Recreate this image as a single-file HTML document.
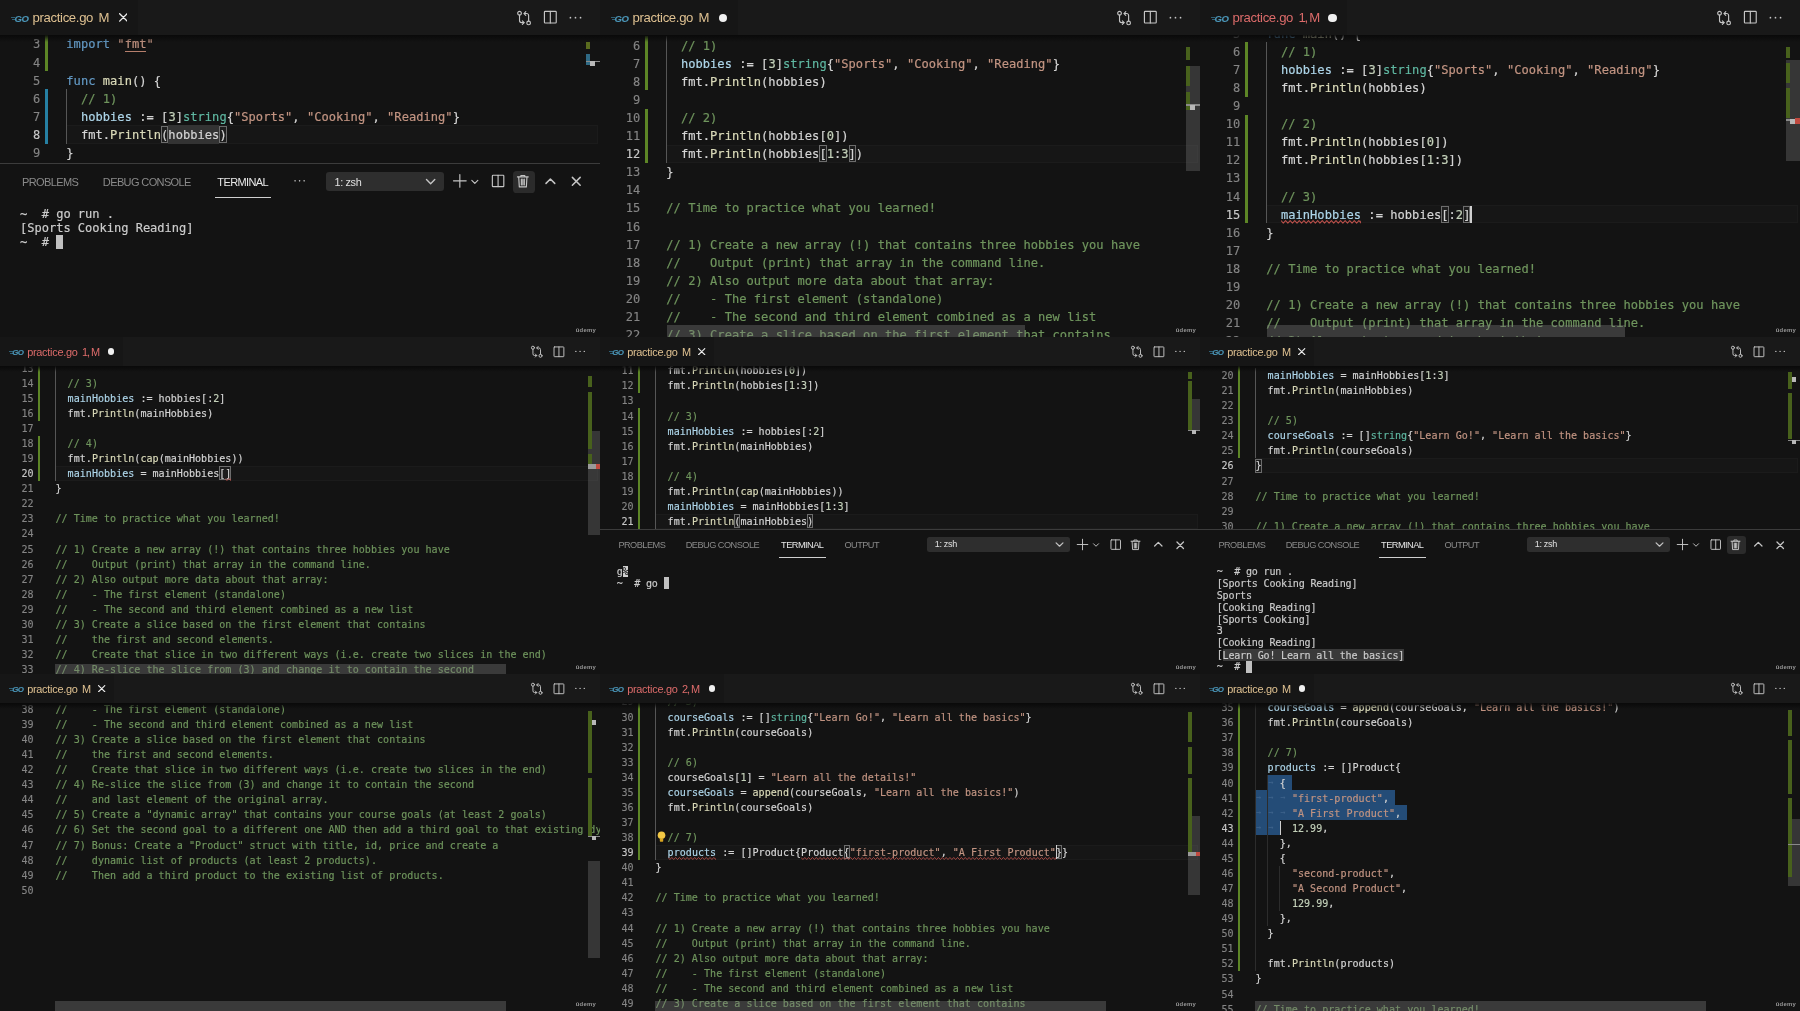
<!DOCTYPE html>
<html lang="en"><head><meta charset="utf-8"><title>practice.go — VS Code grid</title>
<style>
html,body{margin:0;padding:0;background:#131313;}
body>div{will-change:transform}
body{width:1800px;height:1011px;position:relative;overflow:hidden;-webkit-font-smoothing:antialiased}
</style></head><body>
<div style="position:absolute;left:0px;top:0px;width:600px;height:337px;overflow:hidden;background:#131313">
<div style="position:absolute;left:0;top:34.97px;width:600px;height:128.03px;overflow:hidden">
<div style="position:absolute;left:65.73px;top:90.48px;width:532.46px;height:18.09px;box-sizing:border-box;border:1px solid #1b1b1b;background:#161616"></div>
<div style="position:absolute;left:168.36px;top:90.48px;width:51.02px;height:18.09px;background:#333333"></div>
<div style="position:absolute;left:45.22px;top:0.03px;width:3.14px;height:36.18px;background:#5d8626"></div>
<div style="position:absolute;left:45.22px;top:54.30px;width:3.14px;height:54.27px;background:#2680a3"></div>
<div style="position:absolute;left:65.61px;top:54.30px;width:1.50px;height:54.27px;background:#565656"></div>
<div style="position:absolute;left:0;top:0.45px;width:40.28px;height:18.09px;font:12.06px/18.09px 'DejaVu Sans Mono','Liberation Mono',monospace;color:#858585;text-align:right;white-space:pre;-webkit-text-stroke:0.14px">3</div>
<div style="position:absolute;left:66.33px;top:0.45px;height:18.09px;font:12.06px/18.09px 'DejaVu Sans Mono','Liberation Mono',monospace;color:#d4d4d4;white-space:pre;letter-spacing:0.035px;-webkit-text-stroke:0.19px"><span style="color:#6399c4">import</span> <span style="color:#c29482">"fmt"</span></div>
<div style="position:absolute;left:0;top:18.54px;width:40.28px;height:18.09px;font:12.06px/18.09px 'DejaVu Sans Mono','Liberation Mono',monospace;color:#858585;text-align:right;white-space:pre;-webkit-text-stroke:0.14px">4</div>
<div style="position:absolute;left:0;top:36.63px;width:40.28px;height:18.09px;font:12.06px/18.09px 'DejaVu Sans Mono','Liberation Mono',monospace;color:#858585;text-align:right;white-space:pre;-webkit-text-stroke:0.14px">5</div>
<div style="position:absolute;left:66.33px;top:36.63px;height:18.09px;font:12.06px/18.09px 'DejaVu Sans Mono','Liberation Mono',monospace;color:#d4d4d4;white-space:pre;letter-spacing:0.035px;-webkit-text-stroke:0.19px"><span style="color:#6399c4">func</span> <span style="color:#d9d9b8">main</span>() {</div>
<div style="position:absolute;left:0;top:54.72px;width:40.28px;height:18.09px;font:12.06px/18.09px 'DejaVu Sans Mono','Liberation Mono',monospace;color:#858585;text-align:right;white-space:pre;-webkit-text-stroke:0.14px">6</div>
<div style="position:absolute;left:66.33px;top:54.72px;height:18.09px;font:12.06px/18.09px 'DejaVu Sans Mono','Liberation Mono',monospace;color:#d4d4d4;white-space:pre;letter-spacing:0.035px;-webkit-text-stroke:0.19px">  <span style="color:#6f955d">// 1)</span></div>
<div style="position:absolute;left:0;top:72.81px;width:40.28px;height:18.09px;font:12.06px/18.09px 'DejaVu Sans Mono','Liberation Mono',monospace;color:#858585;text-align:right;white-space:pre;-webkit-text-stroke:0.14px">7</div>
<div style="position:absolute;left:66.33px;top:72.81px;height:18.09px;font:12.06px/18.09px 'DejaVu Sans Mono','Liberation Mono',monospace;color:#d4d4d4;white-space:pre;letter-spacing:0.035px;-webkit-text-stroke:0.19px">  <span style="color:#add5e9">hobbies</span> := [<span style="color:#c4d1ba">3</span>]<span style="color:#5fb7a1">string</span>{<span style="color:#c29482">"Sports"</span>, <span style="color:#c29482">"Cooking"</span>, <span style="color:#c29482">"Reading"</span>}</div>
<div style="position:absolute;left:0;top:90.90px;width:40.28px;height:18.09px;font:12.06px/18.09px 'DejaVu Sans Mono','Liberation Mono',monospace;color:#c8c8c8;text-align:right;white-space:pre;-webkit-text-stroke:0.14px">8</div>
<div style="position:absolute;left:66.33px;top:90.90px;height:18.09px;font:12.06px/18.09px 'DejaVu Sans Mono','Liberation Mono',monospace;color:#d4d4d4;white-space:pre;letter-spacing:0.035px;-webkit-text-stroke:0.19px">  fmt.<span style="color:#d9d9b8">Println</span>(hobbies)</div>
<div style="position:absolute;left:0;top:108.99px;width:40.28px;height:18.09px;font:12.06px/18.09px 'DejaVu Sans Mono','Liberation Mono',monospace;color:#858585;text-align:right;white-space:pre;-webkit-text-stroke:0.14px">9</div>
<div style="position:absolute;left:66.33px;top:108.99px;height:18.09px;font:12.06px/18.09px 'DejaVu Sans Mono','Liberation Mono',monospace;color:#d4d4d4;white-space:pre;letter-spacing:0.035px;-webkit-text-stroke:0.19px">}</div>
<div style="position:absolute;left:161.08px;top:91.08px;width:7.29px;height:16.88px;box-sizing:border-box;border:1px solid #6c6c6c;background:rgba(255,255,255,0.03)"></div><div style="position:absolute;left:219.38px;top:91.08px;width:7.29px;height:16.88px;box-sizing:border-box;border:1px solid #6c6c6c;background:rgba(255,255,255,0.03)"></div><div style="position:absolute;left:124.64px;top:15.82px;width:21.86px;height:1.33px;background:#b67f6c"></div>
<div style="position:absolute;left:585.70px;top:7.53px;width:4.30px;height:7.00px;background:#5a6b1e"></div>
<div style="position:absolute;left:585.70px;top:18.83px;width:4.30px;height:10.80px;background:#2f6a85"></div>
<div style="position:absolute;left:585.70px;top:25.63px;width:14.30px;height:1.60px;background:#8a8a8a"></div>
<div style="position:absolute;left:590.00px;top:26.23px;width:5.00px;height:4.80px;background:#b8b8b8"></div>
<div style="position:absolute;left:0.00px;top:0.00px;width:600.00px;height:6.63px;background:linear-gradient(rgba(9,9,9,0.95),rgba(9,9,9,0.7) 30%,rgba(9,9,9,0))"></div>
</div>
<div style="position:absolute;left:0.00px;top:0.00px;width:600.00px;height:34.97px;background:#191919"></div>
<div style="position:absolute;left:0.00px;top:0.00px;width:137.50px;height:34.97px;background:#161616"></div>
<div style="position:absolute;left:10.37px;top:15.20px;width:19.30px;height:9.65px;"><div style="position:absolute;left:0.72px;top:1.57px;width:4.10px;height:0.84px;background:#2f6076"></div><div style="position:absolute;left:1.93px;top:3.50px;width:2.89px;height:0.84px;background:#2f6076"></div><div style="position:absolute;left:4.22px;top:-2.29px;font:italic bold 9.53px/11.43px 'Liberation Sans','DejaVu Sans',sans-serif;color:#4b96b8;-webkit-text-stroke:0.12px #4b96b8;letter-spacing:-0.60px">GO</div></div>
<div style="position:absolute;left:32.56px;top:0;height:34.97px;font:13.15px/36.18px 'Liberation Sans','DejaVu Sans',sans-serif;color:#dfc191;white-space:pre;letter-spacing:-0.34px">practice.go<span style="padding-left:5.31px;letter-spacing:-0.36px">M</span></div>
<svg style="position:absolute;left:118.69px;top:13.39px" width="8.80" height="8.80" viewBox="0 0 8 8" stroke="#ececec" stroke-width="1.25" stroke-linecap="round"><path d="M0.6 0.6l6.8 6.8M7.4 0.6L0.6 7.4"/></svg>
<svg style="position:absolute;left:515.58px;top:9.65px" width="16.16" height="16.16" viewBox="0 0 16 16" fill="none" stroke="#c5c5c5" stroke-width="1.13" stroke-linecap="round" stroke-linejoin="round"><circle cx="3.5" cy="3.2" r="1.8"/><circle cx="12.5" cy="12.8" r="1.8"/><path d="M3.5 5v5.5a2 2 0 0 0 2 2h2.3"/><path d="M6.3 10.7l1.8 1.8-1.8 1.8" /><path d="M12.5 11V5.5a2 2 0 0 0-2-2H8.2"/><path d="M9.7 1.7L7.9 3.5l1.8 1.8"/></svg>
<svg style="position:absolute;left:542.35px;top:9.17px" width="16.16" height="16.16" viewBox="0 0 16 16" fill="none" stroke="#c5c5c5" stroke-width="1.13" stroke-linecap="round" stroke-linejoin="round"><rect x="2.4" y="2.3" width="11.7" height="11.6" rx="0.7"/><path d="M8.25 2.3v11.6"/></svg>
<svg style="position:absolute;left:567.44px;top:9.65px" width="16.16" height="16.16" viewBox="0 0 16 16" fill="none" stroke="#c5c5c5" stroke-width="1.13" stroke-linecap="round" stroke-linejoin="round"><g fill="#c5c5c5" stroke="none"><circle cx="3.4" cy="7.6" r="0.85"/><circle cx="8.4" cy="7.6" r="0.85"/><circle cx="13.4" cy="7.6" r="0.85"/></g></svg>
<div style="position:absolute;left:0.00px;top:163.00px;width:600.00px;height:174.00px;background:#131313"></div>
<div style="position:absolute;left:0.00px;top:163.00px;width:600.00px;height:1.00px;background:#3c3c3c"></div>
<div style="position:absolute;left:22.07px;top:174.82px;font:11.03px/14.47px 'Liberation Sans','DejaVu Sans',sans-serif;color:#8a8a8a;white-space:pre;letter-spacing:-0.63px">PROBLEMS</div>
<div style="position:absolute;left:102.87px;top:174.82px;font:11.03px/14.47px 'Liberation Sans','DejaVu Sans',sans-serif;color:#8a8a8a;white-space:pre;letter-spacing:-0.63px">DEBUG CONSOLE</div>
<div style="position:absolute;left:217.32px;top:174.82px;font:11.03px/14.47px 'Liberation Sans','DejaVu Sans',sans-serif;color:#e7e7e7;white-space:pre;letter-spacing:-0.63px">TERMINAL</div>
<div style="position:absolute;left:214.67px;top:197.01px;width:55.96px;height:1.33px;background:#d0d0d0"></div>
<svg style="position:absolute;left:292.21px;top:174.34px" width="14.47" height="14.47" viewBox="0 0 16 16" fill="none" stroke="#c5c5c5" stroke-width="1.27" stroke-linecap="round" stroke-linejoin="round"><g fill="#c5c5c5" stroke="none"><circle cx="3.4" cy="7.6" r="0.85"/><circle cx="8.4" cy="7.6" r="0.85"/><circle cx="13.4" cy="7.6" r="0.85"/></g></svg>
<div style="position:absolute;left:325.64px;top:171.80px;width:118.55px;height:19.18px;background:#2e2e2e;border-radius:3.01px"></div>
<div style="position:absolute;left:334.56px;top:172.53px;font:10.85px/19.05px 'Liberation Sans','DejaVu Sans',sans-serif;color:#e0e0e0;white-space:pre;letter-spacing:-0.36px">1: zsh</div>
<svg style="position:absolute;left:424.29px;top:174.94px" width="13.27" height="13.27" viewBox="0 0 16 16" fill="none" stroke="#c5c5c5" stroke-width="1.67" stroke-linecap="round" stroke-linejoin="round"><path d="M3 5.5l5 5 5-5"/></svg>
<svg style="position:absolute;left:451.66px;top:173.01px" width="15.68" height="15.68" viewBox="0 0 16 16" fill="none" stroke="#c5c5c5" stroke-width="1.17" stroke-linecap="round" stroke-linejoin="round"><path d="M8 1.5v13M1.5 8h13"/></svg>
<svg style="position:absolute;left:470.11px;top:176.87px" width="9.65" height="9.65" viewBox="0 0 16 16" fill="none" stroke="#c5c5c5" stroke-width="1.90" stroke-linecap="round" stroke-linejoin="round"><path d="M3 5.5l5 5 5-5"/></svg>
<svg style="position:absolute;left:490.25px;top:173.13px" width="15.68" height="15.68" viewBox="0 0 16 16" fill="none" stroke="#c5c5c5" stroke-width="1.17" stroke-linecap="round" stroke-linejoin="round"><rect x="2.4" y="2.3" width="11.7" height="11.6" rx="0.7"/><path d="M8.25 2.3v11.6"/></svg>
<div style="position:absolute;left:512.93px;top:171.20px;width:21.95px;height:21.59px;background:#2b2b2b;border-radius:3.62px"></div>
<svg style="position:absolute;left:515.34px;top:172.89px" width="15.68" height="15.68" viewBox="0 0 16 16" fill="none" stroke="#c5c5c5" stroke-width="1.17" stroke-linecap="round" stroke-linejoin="round"><path d="M2.5 4h11M6 4V2.5h4V4M3.8 4l.6 10.2h7.2L12.2 4M6.5 6.3v6M8 6.3v6M9.5 6.3v6"/></svg>
<svg style="position:absolute;left:543.56px;top:174.82px" width="12.78" height="12.78" viewBox="0 0 16 16" fill="none" stroke="#c5c5c5" stroke-width="1.89" stroke-linecap="round" stroke-linejoin="round"><path d="M2.5 10.5l5.5-5.5 5.5 5.5"/></svg>
<svg style="position:absolute;left:570.33px;top:175.06px" width="12.54" height="12.54" viewBox="0 0 16 16" fill="none" stroke="#c5c5c5" stroke-width="1.92" stroke-linecap="round" stroke-linejoin="round"><path d="M3 3l10 10M13 3L3 13"/></svg>
<div style="position:absolute;left:20.02px;top:207.26px;height:14.07px;font:12.06px/14.07px 'DejaVu Sans Mono','Liberation Mono',monospace;color:#cccccc;white-space:pre;letter-spacing:-0.025px;-webkit-text-stroke:0.18px">~  # go run .</div>
<div style="position:absolute;left:20.02px;top:221.33px;height:14.07px;font:12.06px/14.07px 'DejaVu Sans Mono','Liberation Mono',monospace;color:#cccccc;white-space:pre;letter-spacing:-0.025px;-webkit-text-stroke:0.18px">[Sports Cooking Reading]</div>
<div style="position:absolute;left:20.02px;top:235.41px;height:14.07px;font:12.06px/14.07px 'DejaVu Sans Mono','Liberation Mono',monospace;color:#cccccc;white-space:pre;letter-spacing:-0.025px;-webkit-text-stroke:0.18px">~  # </div>
<div style="position:absolute;left:56.20px;top:235.05px;width:7.24px;height:13.59px;background:#c0c0c0"></div>
<div style="position:absolute;left:575.80px;top:326.20px;font:bold 5.9px/9px 'Liberation Sans','DejaVu Sans',sans-serif;color:#989898;letter-spacing:0.22px">ûdemy</div>
</div>
<div style="position:absolute;left:600px;top:0px;width:600px;height:337px;overflow:hidden;background:#131313">
<div style="position:absolute;left:0;top:34.97px;width:600px;height:302.03px;overflow:hidden">
<div style="position:absolute;left:65.73px;top:109.77px;width:532.46px;height:18.09px;box-sizing:border-box;border:1px solid #1b1b1b;background:#161616"></div>
<div style="position:absolute;left:45.22px;top:1.23px;width:3.14px;height:54.27px;background:#5d8626"></div>
<div style="position:absolute;left:45.22px;top:73.59px;width:3.14px;height:54.27px;background:#5d8626"></div>
<div style="position:absolute;left:65.61px;top:1.23px;width:1.50px;height:126.63px;background:#565656"></div>
<div style="position:absolute;left:0;top:1.65px;width:40.28px;height:18.09px;font:12.06px/18.09px 'DejaVu Sans Mono','Liberation Mono',monospace;color:#858585;text-align:right;white-space:pre;-webkit-text-stroke:0.14px">6</div>
<div style="position:absolute;left:66.33px;top:1.65px;height:18.09px;font:12.06px/18.09px 'DejaVu Sans Mono','Liberation Mono',monospace;color:#d4d4d4;white-space:pre;letter-spacing:0.035px;-webkit-text-stroke:0.19px">  <span style="color:#6f955d">// 1)</span></div>
<div style="position:absolute;left:0;top:19.74px;width:40.28px;height:18.09px;font:12.06px/18.09px 'DejaVu Sans Mono','Liberation Mono',monospace;color:#858585;text-align:right;white-space:pre;-webkit-text-stroke:0.14px">7</div>
<div style="position:absolute;left:66.33px;top:19.74px;height:18.09px;font:12.06px/18.09px 'DejaVu Sans Mono','Liberation Mono',monospace;color:#d4d4d4;white-space:pre;letter-spacing:0.035px;-webkit-text-stroke:0.19px">  <span style="color:#add5e9">hobbies</span> := [<span style="color:#c4d1ba">3</span>]<span style="color:#5fb7a1">string</span>{<span style="color:#c29482">"Sports"</span>, <span style="color:#c29482">"Cooking"</span>, <span style="color:#c29482">"Reading"</span>}</div>
<div style="position:absolute;left:0;top:37.83px;width:40.28px;height:18.09px;font:12.06px/18.09px 'DejaVu Sans Mono','Liberation Mono',monospace;color:#858585;text-align:right;white-space:pre;-webkit-text-stroke:0.14px">8</div>
<div style="position:absolute;left:66.33px;top:37.83px;height:18.09px;font:12.06px/18.09px 'DejaVu Sans Mono','Liberation Mono',monospace;color:#d4d4d4;white-space:pre;letter-spacing:0.035px;-webkit-text-stroke:0.19px">  fmt.<span style="color:#d9d9b8">Println</span>(hobbies)</div>
<div style="position:absolute;left:0;top:55.92px;width:40.28px;height:18.09px;font:12.06px/18.09px 'DejaVu Sans Mono','Liberation Mono',monospace;color:#858585;text-align:right;white-space:pre;-webkit-text-stroke:0.14px">9</div>
<div style="position:absolute;left:0;top:74.01px;width:40.28px;height:18.09px;font:12.06px/18.09px 'DejaVu Sans Mono','Liberation Mono',monospace;color:#858585;text-align:right;white-space:pre;-webkit-text-stroke:0.14px">10</div>
<div style="position:absolute;left:66.33px;top:74.01px;height:18.09px;font:12.06px/18.09px 'DejaVu Sans Mono','Liberation Mono',monospace;color:#d4d4d4;white-space:pre;letter-spacing:0.035px;-webkit-text-stroke:0.19px">  <span style="color:#6f955d">// 2)</span></div>
<div style="position:absolute;left:0;top:92.10px;width:40.28px;height:18.09px;font:12.06px/18.09px 'DejaVu Sans Mono','Liberation Mono',monospace;color:#858585;text-align:right;white-space:pre;-webkit-text-stroke:0.14px">11</div>
<div style="position:absolute;left:66.33px;top:92.10px;height:18.09px;font:12.06px/18.09px 'DejaVu Sans Mono','Liberation Mono',monospace;color:#d4d4d4;white-space:pre;letter-spacing:0.035px;-webkit-text-stroke:0.19px">  fmt.<span style="color:#d9d9b8">Println</span>(hobbies[<span style="color:#c4d1ba">0</span>])</div>
<div style="position:absolute;left:0;top:110.19px;width:40.28px;height:18.09px;font:12.06px/18.09px 'DejaVu Sans Mono','Liberation Mono',monospace;color:#c8c8c8;text-align:right;white-space:pre;-webkit-text-stroke:0.14px">12</div>
<div style="position:absolute;left:66.33px;top:110.19px;height:18.09px;font:12.06px/18.09px 'DejaVu Sans Mono','Liberation Mono',monospace;color:#d4d4d4;white-space:pre;letter-spacing:0.035px;-webkit-text-stroke:0.19px">  fmt.<span style="color:#d9d9b8">Println</span>(hobbies[<span style="color:#c4d1ba">1</span>:<span style="color:#c4d1ba">3</span>])</div>
<div style="position:absolute;left:0;top:128.28px;width:40.28px;height:18.09px;font:12.06px/18.09px 'DejaVu Sans Mono','Liberation Mono',monospace;color:#858585;text-align:right;white-space:pre;-webkit-text-stroke:0.14px">13</div>
<div style="position:absolute;left:66.33px;top:128.28px;height:18.09px;font:12.06px/18.09px 'DejaVu Sans Mono','Liberation Mono',monospace;color:#d4d4d4;white-space:pre;letter-spacing:0.035px;-webkit-text-stroke:0.19px">}</div>
<div style="position:absolute;left:0;top:146.37px;width:40.28px;height:18.09px;font:12.06px/18.09px 'DejaVu Sans Mono','Liberation Mono',monospace;color:#858585;text-align:right;white-space:pre;-webkit-text-stroke:0.14px">14</div>
<div style="position:absolute;left:0;top:164.46px;width:40.28px;height:18.09px;font:12.06px/18.09px 'DejaVu Sans Mono','Liberation Mono',monospace;color:#858585;text-align:right;white-space:pre;-webkit-text-stroke:0.14px">15</div>
<div style="position:absolute;left:66.33px;top:164.46px;height:18.09px;font:12.06px/18.09px 'DejaVu Sans Mono','Liberation Mono',monospace;color:#d4d4d4;white-space:pre;letter-spacing:0.035px;-webkit-text-stroke:0.19px"><span style="color:#6f955d">// Time to practice what you learned!</span></div>
<div style="position:absolute;left:0;top:182.55px;width:40.28px;height:18.09px;font:12.06px/18.09px 'DejaVu Sans Mono','Liberation Mono',monospace;color:#858585;text-align:right;white-space:pre;-webkit-text-stroke:0.14px">16</div>
<div style="position:absolute;left:0;top:200.64px;width:40.28px;height:18.09px;font:12.06px/18.09px 'DejaVu Sans Mono','Liberation Mono',monospace;color:#858585;text-align:right;white-space:pre;-webkit-text-stroke:0.14px">17</div>
<div style="position:absolute;left:66.33px;top:200.64px;height:18.09px;font:12.06px/18.09px 'DejaVu Sans Mono','Liberation Mono',monospace;color:#d4d4d4;white-space:pre;letter-spacing:0.035px;-webkit-text-stroke:0.19px"><span style="color:#6f955d">// 1) Create a new array (!) that contains three hobbies you have</span></div>
<div style="position:absolute;left:0;top:218.73px;width:40.28px;height:18.09px;font:12.06px/18.09px 'DejaVu Sans Mono','Liberation Mono',monospace;color:#858585;text-align:right;white-space:pre;-webkit-text-stroke:0.14px">18</div>
<div style="position:absolute;left:66.33px;top:218.73px;height:18.09px;font:12.06px/18.09px 'DejaVu Sans Mono','Liberation Mono',monospace;color:#d4d4d4;white-space:pre;letter-spacing:0.035px;-webkit-text-stroke:0.19px"><span style="color:#6f955d">//    Output (print) that array in the command line.</span></div>
<div style="position:absolute;left:0;top:236.82px;width:40.28px;height:18.09px;font:12.06px/18.09px 'DejaVu Sans Mono','Liberation Mono',monospace;color:#858585;text-align:right;white-space:pre;-webkit-text-stroke:0.14px">19</div>
<div style="position:absolute;left:66.33px;top:236.82px;height:18.09px;font:12.06px/18.09px 'DejaVu Sans Mono','Liberation Mono',monospace;color:#d4d4d4;white-space:pre;letter-spacing:0.035px;-webkit-text-stroke:0.19px"><span style="color:#6f955d">// 2) Also output more data about that array:</span></div>
<div style="position:absolute;left:0;top:254.91px;width:40.28px;height:18.09px;font:12.06px/18.09px 'DejaVu Sans Mono','Liberation Mono',monospace;color:#858585;text-align:right;white-space:pre;-webkit-text-stroke:0.14px">20</div>
<div style="position:absolute;left:66.33px;top:254.91px;height:18.09px;font:12.06px/18.09px 'DejaVu Sans Mono','Liberation Mono',monospace;color:#d4d4d4;white-space:pre;letter-spacing:0.035px;-webkit-text-stroke:0.19px"><span style="color:#6f955d">//    - The first element (standalone)</span></div>
<div style="position:absolute;left:0;top:273.00px;width:40.28px;height:18.09px;font:12.06px/18.09px 'DejaVu Sans Mono','Liberation Mono',monospace;color:#858585;text-align:right;white-space:pre;-webkit-text-stroke:0.14px">21</div>
<div style="position:absolute;left:66.33px;top:273.00px;height:18.09px;font:12.06px/18.09px 'DejaVu Sans Mono','Liberation Mono',monospace;color:#d4d4d4;white-space:pre;letter-spacing:0.035px;-webkit-text-stroke:0.19px"><span style="color:#6f955d">//    - The second and third element combined as a new list</span></div>
<div style="position:absolute;left:0;top:291.09px;width:40.28px;height:18.09px;font:12.06px/18.09px 'DejaVu Sans Mono','Liberation Mono',monospace;color:#858585;text-align:right;white-space:pre;-webkit-text-stroke:0.14px">22</div>
<div style="position:absolute;left:66.33px;top:291.09px;height:18.09px;font:12.06px/18.09px 'DejaVu Sans Mono','Liberation Mono',monospace;color:#d4d4d4;white-space:pre;letter-spacing:0.035px;-webkit-text-stroke:0.19px"><span style="color:#6f955d">// 3) Create a slice based on the first element that contains</span></div>
<div style="position:absolute;left:219.38px;top:110.37px;width:7.29px;height:16.88px;box-sizing:border-box;border:1px solid #6c6c6c;background:rgba(255,255,255,0.03)"></div><div style="position:absolute;left:248.53px;top:110.37px;width:7.29px;height:16.88px;box-sizing:border-box;border:1px solid #6c6c6c;background:rgba(255,255,255,0.03)"></div>
<div style="position:absolute;left:585.53px;top:31.03px;width:14.47px;height:105.00px;background:rgba(121,121,121,0.35)"></div>
<div style="position:absolute;left:585.70px;top:12.03px;width:4.30px;height:13.00px;background:#48611c"></div>
<div style="position:absolute;left:585.70px;top:31.03px;width:4.30px;height:20.00px;background:#48611c"></div>
<div style="position:absolute;left:585.70px;top:57.03px;width:4.30px;height:18.00px;background:#48611c"></div>
<div style="position:absolute;left:585.70px;top:69.53px;width:14.30px;height:1.50px;background:#8a8a8a"></div>
<div style="position:absolute;left:590.00px;top:70.03px;width:5.00px;height:5.00px;background:#b8b8b8"></div>
<div style="position:absolute;left:66.70px;top:289.85px;width:358.30px;height:13.18px;background:rgba(128,128,128,0.36)"></div>
<div style="position:absolute;left:0.00px;top:0.00px;width:600.00px;height:6.63px;background:linear-gradient(rgba(9,9,9,0.95),rgba(9,9,9,0.7) 30%,rgba(9,9,9,0))"></div>
</div>
<div style="position:absolute;left:0.00px;top:0.00px;width:600.00px;height:34.97px;background:#191919"></div>
<div style="position:absolute;left:0.00px;top:0.00px;width:137.50px;height:34.97px;background:#161616"></div>
<div style="position:absolute;left:10.37px;top:15.20px;width:19.30px;height:9.65px;"><div style="position:absolute;left:0.72px;top:1.57px;width:4.10px;height:0.84px;background:#2f6076"></div><div style="position:absolute;left:1.93px;top:3.50px;width:2.89px;height:0.84px;background:#2f6076"></div><div style="position:absolute;left:4.22px;top:-2.29px;font:italic bold 9.53px/11.43px 'Liberation Sans','DejaVu Sans',sans-serif;color:#4b96b8;-webkit-text-stroke:0.12px #4b96b8;letter-spacing:-0.60px">GO</div></div>
<div style="position:absolute;left:32.56px;top:0;height:34.97px;font:13.15px/36.18px 'Liberation Sans','DejaVu Sans',sans-serif;color:#dfc191;white-space:pre;letter-spacing:-0.34px">practice.go<span style="padding-left:5.31px;letter-spacing:-0.36px">M</span></div>
<div style="position:absolute;left:118.93px;top:13.75px;width:8.20px;height:8.20px;background:#f0f0f0;border-radius:50%"></div>
<svg style="position:absolute;left:515.58px;top:9.65px" width="16.16" height="16.16" viewBox="0 0 16 16" fill="none" stroke="#c5c5c5" stroke-width="1.13" stroke-linecap="round" stroke-linejoin="round"><circle cx="3.5" cy="3.2" r="1.8"/><circle cx="12.5" cy="12.8" r="1.8"/><path d="M3.5 5v5.5a2 2 0 0 0 2 2h2.3"/><path d="M6.3 10.7l1.8 1.8-1.8 1.8" /><path d="M12.5 11V5.5a2 2 0 0 0-2-2H8.2"/><path d="M9.7 1.7L7.9 3.5l1.8 1.8"/></svg>
<svg style="position:absolute;left:542.35px;top:9.17px" width="16.16" height="16.16" viewBox="0 0 16 16" fill="none" stroke="#c5c5c5" stroke-width="1.13" stroke-linecap="round" stroke-linejoin="round"><rect x="2.4" y="2.3" width="11.7" height="11.6" rx="0.7"/><path d="M8.25 2.3v11.6"/></svg>
<svg style="position:absolute;left:567.44px;top:9.65px" width="16.16" height="16.16" viewBox="0 0 16 16" fill="none" stroke="#c5c5c5" stroke-width="1.13" stroke-linecap="round" stroke-linejoin="round"><g fill="#c5c5c5" stroke="none"><circle cx="3.4" cy="7.6" r="0.85"/><circle cx="8.4" cy="7.6" r="0.85"/><circle cx="13.4" cy="7.6" r="0.85"/></g></svg>
<div style="position:absolute;left:575.80px;top:326.20px;font:bold 5.9px/9px 'Liberation Sans','DejaVu Sans',sans-serif;color:#989898;letter-spacing:0.22px">ûdemy</div>
</div>
<div style="position:absolute;left:1200px;top:0px;width:600px;height:337px;overflow:hidden;background:#131313">
<div style="position:absolute;left:0;top:34.97px;width:600px;height:302.03px;overflow:hidden">
<div style="position:absolute;left:65.73px;top:170.23px;width:532.46px;height:18.09px;box-sizing:border-box;border:1px solid #1b1b1b;background:#161616"></div>
<div style="position:absolute;left:45.22px;top:7.42px;width:3.14px;height:54.27px;background:#5d8626"></div>
<div style="position:absolute;left:45.22px;top:79.78px;width:3.14px;height:108.54px;background:#5d8626"></div>
<div style="position:absolute;left:65.61px;top:7.42px;width:1.50px;height:180.90px;background:#565656"></div>
<div style="position:absolute;left:0;top:-10.25px;width:40.28px;height:18.09px;font:12.06px/18.09px 'DejaVu Sans Mono','Liberation Mono',monospace;color:#858585;text-align:right;white-space:pre;-webkit-text-stroke:0.14px">5</div>
<div style="position:absolute;left:66.33px;top:-10.25px;height:18.09px;font:12.06px/18.09px 'DejaVu Sans Mono','Liberation Mono',monospace;color:#d4d4d4;white-space:pre;letter-spacing:0.035px;-webkit-text-stroke:0.19px"><span style="color:#6399c4">func</span> <span style="color:#d9d9b8">main</span>() {</div>
<div style="position:absolute;left:0;top:7.84px;width:40.28px;height:18.09px;font:12.06px/18.09px 'DejaVu Sans Mono','Liberation Mono',monospace;color:#858585;text-align:right;white-space:pre;-webkit-text-stroke:0.14px">6</div>
<div style="position:absolute;left:66.33px;top:7.84px;height:18.09px;font:12.06px/18.09px 'DejaVu Sans Mono','Liberation Mono',monospace;color:#d4d4d4;white-space:pre;letter-spacing:0.035px;-webkit-text-stroke:0.19px">  <span style="color:#6f955d">// 1)</span></div>
<div style="position:absolute;left:0;top:25.93px;width:40.28px;height:18.09px;font:12.06px/18.09px 'DejaVu Sans Mono','Liberation Mono',monospace;color:#858585;text-align:right;white-space:pre;-webkit-text-stroke:0.14px">7</div>
<div style="position:absolute;left:66.33px;top:25.93px;height:18.09px;font:12.06px/18.09px 'DejaVu Sans Mono','Liberation Mono',monospace;color:#d4d4d4;white-space:pre;letter-spacing:0.035px;-webkit-text-stroke:0.19px">  <span style="color:#add5e9">hobbies</span> := [<span style="color:#c4d1ba">3</span>]<span style="color:#5fb7a1">string</span>{<span style="color:#c29482">"Sports"</span>, <span style="color:#c29482">"Cooking"</span>, <span style="color:#c29482">"Reading"</span>}</div>
<div style="position:absolute;left:0;top:44.02px;width:40.28px;height:18.09px;font:12.06px/18.09px 'DejaVu Sans Mono','Liberation Mono',monospace;color:#858585;text-align:right;white-space:pre;-webkit-text-stroke:0.14px">8</div>
<div style="position:absolute;left:66.33px;top:44.02px;height:18.09px;font:12.06px/18.09px 'DejaVu Sans Mono','Liberation Mono',monospace;color:#d4d4d4;white-space:pre;letter-spacing:0.035px;-webkit-text-stroke:0.19px">  fmt.<span style="color:#d9d9b8">Println</span>(hobbies)</div>
<div style="position:absolute;left:0;top:62.11px;width:40.28px;height:18.09px;font:12.06px/18.09px 'DejaVu Sans Mono','Liberation Mono',monospace;color:#858585;text-align:right;white-space:pre;-webkit-text-stroke:0.14px">9</div>
<div style="position:absolute;left:0;top:80.20px;width:40.28px;height:18.09px;font:12.06px/18.09px 'DejaVu Sans Mono','Liberation Mono',monospace;color:#858585;text-align:right;white-space:pre;-webkit-text-stroke:0.14px">10</div>
<div style="position:absolute;left:66.33px;top:80.20px;height:18.09px;font:12.06px/18.09px 'DejaVu Sans Mono','Liberation Mono',monospace;color:#d4d4d4;white-space:pre;letter-spacing:0.035px;-webkit-text-stroke:0.19px">  <span style="color:#6f955d">// 2)</span></div>
<div style="position:absolute;left:0;top:98.29px;width:40.28px;height:18.09px;font:12.06px/18.09px 'DejaVu Sans Mono','Liberation Mono',monospace;color:#858585;text-align:right;white-space:pre;-webkit-text-stroke:0.14px">11</div>
<div style="position:absolute;left:66.33px;top:98.29px;height:18.09px;font:12.06px/18.09px 'DejaVu Sans Mono','Liberation Mono',monospace;color:#d4d4d4;white-space:pre;letter-spacing:0.035px;-webkit-text-stroke:0.19px">  fmt.<span style="color:#d9d9b8">Println</span>(hobbies[<span style="color:#c4d1ba">0</span>])</div>
<div style="position:absolute;left:0;top:116.38px;width:40.28px;height:18.09px;font:12.06px/18.09px 'DejaVu Sans Mono','Liberation Mono',monospace;color:#858585;text-align:right;white-space:pre;-webkit-text-stroke:0.14px">12</div>
<div style="position:absolute;left:66.33px;top:116.38px;height:18.09px;font:12.06px/18.09px 'DejaVu Sans Mono','Liberation Mono',monospace;color:#d4d4d4;white-space:pre;letter-spacing:0.035px;-webkit-text-stroke:0.19px">  fmt.<span style="color:#d9d9b8">Println</span>(hobbies[<span style="color:#c4d1ba">1</span>:<span style="color:#c4d1ba">3</span>])</div>
<div style="position:absolute;left:0;top:134.47px;width:40.28px;height:18.09px;font:12.06px/18.09px 'DejaVu Sans Mono','Liberation Mono',monospace;color:#858585;text-align:right;white-space:pre;-webkit-text-stroke:0.14px">13</div>
<div style="position:absolute;left:0;top:152.56px;width:40.28px;height:18.09px;font:12.06px/18.09px 'DejaVu Sans Mono','Liberation Mono',monospace;color:#858585;text-align:right;white-space:pre;-webkit-text-stroke:0.14px">14</div>
<div style="position:absolute;left:66.33px;top:152.56px;height:18.09px;font:12.06px/18.09px 'DejaVu Sans Mono','Liberation Mono',monospace;color:#d4d4d4;white-space:pre;letter-spacing:0.035px;-webkit-text-stroke:0.19px">  <span style="color:#6f955d">// 3)</span></div>
<div style="position:absolute;left:0;top:170.65px;width:40.28px;height:18.09px;font:12.06px/18.09px 'DejaVu Sans Mono','Liberation Mono',monospace;color:#c8c8c8;text-align:right;white-space:pre;-webkit-text-stroke:0.14px">15</div>
<div style="position:absolute;left:66.33px;top:170.65px;height:18.09px;font:12.06px/18.09px 'DejaVu Sans Mono','Liberation Mono',monospace;color:#d4d4d4;white-space:pre;letter-spacing:0.035px;-webkit-text-stroke:0.19px">  <span style="color:#add5e9">mainHobbies</span> := hobbies[:<span style="color:#c4d1ba">2</span>]</div>
<div style="position:absolute;left:0;top:188.74px;width:40.28px;height:18.09px;font:12.06px/18.09px 'DejaVu Sans Mono','Liberation Mono',monospace;color:#858585;text-align:right;white-space:pre;-webkit-text-stroke:0.14px">16</div>
<div style="position:absolute;left:66.33px;top:188.74px;height:18.09px;font:12.06px/18.09px 'DejaVu Sans Mono','Liberation Mono',monospace;color:#d4d4d4;white-space:pre;letter-spacing:0.035px;-webkit-text-stroke:0.19px">}</div>
<div style="position:absolute;left:0;top:206.83px;width:40.28px;height:18.09px;font:12.06px/18.09px 'DejaVu Sans Mono','Liberation Mono',monospace;color:#858585;text-align:right;white-space:pre;-webkit-text-stroke:0.14px">17</div>
<div style="position:absolute;left:0;top:224.92px;width:40.28px;height:18.09px;font:12.06px/18.09px 'DejaVu Sans Mono','Liberation Mono',monospace;color:#858585;text-align:right;white-space:pre;-webkit-text-stroke:0.14px">18</div>
<div style="position:absolute;left:66.33px;top:224.92px;height:18.09px;font:12.06px/18.09px 'DejaVu Sans Mono','Liberation Mono',monospace;color:#d4d4d4;white-space:pre;letter-spacing:0.035px;-webkit-text-stroke:0.19px"><span style="color:#6f955d">// Time to practice what you learned!</span></div>
<div style="position:absolute;left:0;top:243.01px;width:40.28px;height:18.09px;font:12.06px/18.09px 'DejaVu Sans Mono','Liberation Mono',monospace;color:#858585;text-align:right;white-space:pre;-webkit-text-stroke:0.14px">19</div>
<div style="position:absolute;left:0;top:261.10px;width:40.28px;height:18.09px;font:12.06px/18.09px 'DejaVu Sans Mono','Liberation Mono',monospace;color:#858585;text-align:right;white-space:pre;-webkit-text-stroke:0.14px">20</div>
<div style="position:absolute;left:66.33px;top:261.10px;height:18.09px;font:12.06px/18.09px 'DejaVu Sans Mono','Liberation Mono',monospace;color:#d4d4d4;white-space:pre;letter-spacing:0.035px;-webkit-text-stroke:0.19px"><span style="color:#6f955d">// 1) Create a new array (!) that contains three hobbies you have</span></div>
<div style="position:absolute;left:0;top:279.19px;width:40.28px;height:18.09px;font:12.06px/18.09px 'DejaVu Sans Mono','Liberation Mono',monospace;color:#858585;text-align:right;white-space:pre;-webkit-text-stroke:0.14px">21</div>
<div style="position:absolute;left:66.33px;top:279.19px;height:18.09px;font:12.06px/18.09px 'DejaVu Sans Mono','Liberation Mono',monospace;color:#d4d4d4;white-space:pre;letter-spacing:0.035px;-webkit-text-stroke:0.19px"><span style="color:#6f955d">//    Output (print) that array in the command line.</span></div>
<div style="position:absolute;left:0;top:297.28px;width:40.28px;height:18.09px;font:12.06px/18.09px 'DejaVu Sans Mono','Liberation Mono',monospace;color:#858585;text-align:right;white-space:pre;-webkit-text-stroke:0.14px">22</div>
<div style="position:absolute;left:66.33px;top:297.28px;height:18.09px;font:12.06px/18.09px 'DejaVu Sans Mono','Liberation Mono',monospace;color:#d4d4d4;white-space:pre;letter-spacing:0.035px;-webkit-text-stroke:0.19px"><span style="color:#6f955d">// 2) Also output more data about that array:</span></div>
<div style="position:absolute;left:241.24px;top:170.83px;width:7.29px;height:16.88px;box-sizing:border-box;border:1px solid #6c6c6c;background:rgba(255,255,255,0.03)"></div><div style="position:absolute;left:263.11px;top:170.83px;width:7.29px;height:16.88px;box-sizing:border-box;border:1px solid #6c6c6c;background:rgba(255,255,255,0.03)"></div><div style="position:absolute;left:270.39px;top:170.83px;width:1.69px;height:16.88px;background:#cfcfcf"></div><svg style="position:absolute;left:80.91px;top:184.94px;opacity:0.9" width="80.17" height="3.62" fill="none" stroke="#cc5650" stroke-width="1.03" stroke-linejoin="round"><polyline points="0.00,0.54 2.29,3.08 4.58,0.54 6.87,3.08 9.17,0.54 11.46,3.08 13.75,0.54 16.04,3.08 18.33,0.54 20.62,3.08 22.91,0.54 25.21,3.08 27.50,0.54 29.79,3.08 32.08,0.54 34.37,3.08 36.66,0.54 38.95,3.08 41.25,0.54 43.54,3.08 45.83,0.54 48.12,3.08 50.41,0.54 52.70,3.08 54.99,0.54 57.28,3.08 59.58,0.54 61.87,3.08 64.16,0.54 66.45,3.08 68.74,0.54 71.03,3.08 73.32,0.54 75.62,3.08 77.91,0.54 80.17,3.08 80.17,0.54"/></svg>
<div style="position:absolute;left:585.53px;top:25.03px;width:14.47px;height:101.00px;background:rgba(121,121,121,0.35)"></div>
<div style="position:absolute;left:585.70px;top:12.03px;width:4.30px;height:11.00px;background:#48611c"></div>
<div style="position:absolute;left:585.70px;top:28.03px;width:4.30px;height:20.00px;background:#48611c"></div>
<div style="position:absolute;left:585.70px;top:53.03px;width:4.30px;height:30.00px;background:#48611c"></div>
<div style="position:absolute;left:585.70px;top:84.53px;width:14.30px;height:1.50px;background:#8a8a8a"></div>
<div style="position:absolute;left:590.00px;top:84.03px;width:5.00px;height:5.00px;background:#b8b8b8"></div>
<div style="position:absolute;left:595.00px;top:83.03px;width:5.00px;height:6.00px;background:#c04a40"></div>
<div style="position:absolute;left:66.70px;top:289.85px;width:358.30px;height:13.18px;background:rgba(128,128,128,0.36)"></div>
<div style="position:absolute;left:0.00px;top:0.00px;width:600.00px;height:6.63px;background:linear-gradient(rgba(9,9,9,0.95),rgba(9,9,9,0.7) 30%,rgba(9,9,9,0))"></div>
</div>
<div style="position:absolute;left:0.00px;top:0.00px;width:600.00px;height:34.97px;background:#191919"></div>
<div style="position:absolute;left:0.00px;top:0.00px;width:147.00px;height:34.97px;background:#161616"></div>
<div style="position:absolute;left:10.37px;top:15.20px;width:19.30px;height:9.65px;"><div style="position:absolute;left:0.72px;top:1.57px;width:4.10px;height:0.84px;background:#2f6076"></div><div style="position:absolute;left:1.93px;top:3.50px;width:2.89px;height:0.84px;background:#2f6076"></div><div style="position:absolute;left:4.22px;top:-2.29px;font:italic bold 9.53px/11.43px 'Liberation Sans','DejaVu Sans',sans-serif;color:#4b96b8;-webkit-text-stroke:0.12px #4b96b8;letter-spacing:-0.60px">GO</div></div>
<div style="position:absolute;left:32.56px;top:0;height:34.97px;font:13.15px/36.18px 'Liberation Sans','DejaVu Sans',sans-serif;color:#dc6b6a;white-space:pre;letter-spacing:-0.34px">practice.go<span style="padding-left:5.31px;letter-spacing:-1.27px">1, M</span></div>
<div style="position:absolute;left:128.43px;top:13.75px;width:8.20px;height:8.20px;background:#f0f0f0;border-radius:50%"></div>
<svg style="position:absolute;left:515.58px;top:9.65px" width="16.16" height="16.16" viewBox="0 0 16 16" fill="none" stroke="#c5c5c5" stroke-width="1.13" stroke-linecap="round" stroke-linejoin="round"><circle cx="3.5" cy="3.2" r="1.8"/><circle cx="12.5" cy="12.8" r="1.8"/><path d="M3.5 5v5.5a2 2 0 0 0 2 2h2.3"/><path d="M6.3 10.7l1.8 1.8-1.8 1.8" /><path d="M12.5 11V5.5a2 2 0 0 0-2-2H8.2"/><path d="M9.7 1.7L7.9 3.5l1.8 1.8"/></svg>
<svg style="position:absolute;left:542.35px;top:9.17px" width="16.16" height="16.16" viewBox="0 0 16 16" fill="none" stroke="#c5c5c5" stroke-width="1.13" stroke-linecap="round" stroke-linejoin="round"><rect x="2.4" y="2.3" width="11.7" height="11.6" rx="0.7"/><path d="M8.25 2.3v11.6"/></svg>
<svg style="position:absolute;left:567.44px;top:9.65px" width="16.16" height="16.16" viewBox="0 0 16 16" fill="none" stroke="#c5c5c5" stroke-width="1.13" stroke-linecap="round" stroke-linejoin="round"><g fill="#c5c5c5" stroke="none"><circle cx="3.4" cy="7.6" r="0.85"/><circle cx="8.4" cy="7.6" r="0.85"/><circle cx="13.4" cy="7.6" r="0.85"/></g></svg>
<div style="position:absolute;left:575.80px;top:326.20px;font:bold 5.9px/9px 'Liberation Sans','DejaVu Sans',sans-serif;color:#989898;letter-spacing:0.22px">ûdemy</div>
</div>
<div style="position:absolute;left:0px;top:337px;width:600px;height:337px;overflow:hidden;background:#131313">
<div style="position:absolute;left:0;top:29.14px;width:600px;height:307.86px;overflow:hidden">
<div style="position:absolute;left:54.98px;top:99.68px;width:543.52px;height:15.07px;box-sizing:border-box;border:1px solid #1b1b1b;background:#161616"></div>
<div style="position:absolute;left:37.69px;top:-5.84px;width:2.61px;height:60.30px;background:#5d8626"></div>
<div style="position:absolute;left:37.69px;top:69.53px;width:2.61px;height:45.22px;background:#5d8626"></div>
<div style="position:absolute;left:54.87px;top:-5.84px;width:1.10px;height:120.60px;background:#565656"></div>
<div style="position:absolute;left:0;top:-5.49px;width:33.57px;height:15.07px;font:10.05px/15.07px 'DejaVu Sans Mono','Liberation Mono',monospace;color:#858585;text-align:right;white-space:pre;-webkit-text-stroke:0.12px">13</div>
<div style="position:absolute;left:0;top:9.58px;width:33.57px;height:15.07px;font:10.05px/15.07px 'DejaVu Sans Mono','Liberation Mono',monospace;color:#858585;text-align:right;white-space:pre;-webkit-text-stroke:0.12px">14</div>
<div style="position:absolute;left:55.48px;top:9.58px;height:15.07px;font:10.05px/15.07px 'DejaVu Sans Mono','Liberation Mono',monospace;color:#d4d4d4;white-space:pre;letter-spacing:0.018px;-webkit-text-stroke:0.16px">  <span style="color:#6f955d">// 3)</span></div>
<div style="position:absolute;left:0;top:24.66px;width:33.57px;height:15.07px;font:10.05px/15.07px 'DejaVu Sans Mono','Liberation Mono',monospace;color:#858585;text-align:right;white-space:pre;-webkit-text-stroke:0.12px">15</div>
<div style="position:absolute;left:55.48px;top:24.66px;height:15.07px;font:10.05px/15.07px 'DejaVu Sans Mono','Liberation Mono',monospace;color:#d4d4d4;white-space:pre;letter-spacing:0.018px;-webkit-text-stroke:0.16px">  <span style="color:#add5e9">mainHobbies</span> := hobbies[:<span style="color:#c4d1ba">2</span>]</div>
<div style="position:absolute;left:0;top:39.73px;width:33.57px;height:15.07px;font:10.05px/15.07px 'DejaVu Sans Mono','Liberation Mono',monospace;color:#858585;text-align:right;white-space:pre;-webkit-text-stroke:0.12px">16</div>
<div style="position:absolute;left:55.48px;top:39.73px;height:15.07px;font:10.05px/15.07px 'DejaVu Sans Mono','Liberation Mono',monospace;color:#d4d4d4;white-space:pre;letter-spacing:0.018px;-webkit-text-stroke:0.16px">  fmt.<span style="color:#d9d9b8">Println</span>(mainHobbies)</div>
<div style="position:absolute;left:0;top:54.81px;width:33.57px;height:15.07px;font:10.05px/15.07px 'DejaVu Sans Mono','Liberation Mono',monospace;color:#858585;text-align:right;white-space:pre;-webkit-text-stroke:0.12px">17</div>
<div style="position:absolute;left:0;top:69.88px;width:33.57px;height:15.07px;font:10.05px/15.07px 'DejaVu Sans Mono','Liberation Mono',monospace;color:#858585;text-align:right;white-space:pre;-webkit-text-stroke:0.12px">18</div>
<div style="position:absolute;left:55.48px;top:69.88px;height:15.07px;font:10.05px/15.07px 'DejaVu Sans Mono','Liberation Mono',monospace;color:#d4d4d4;white-space:pre;letter-spacing:0.018px;-webkit-text-stroke:0.16px">  <span style="color:#6f955d">// 4)</span></div>
<div style="position:absolute;left:0;top:84.96px;width:33.57px;height:15.07px;font:10.05px/15.07px 'DejaVu Sans Mono','Liberation Mono',monospace;color:#858585;text-align:right;white-space:pre;-webkit-text-stroke:0.12px">19</div>
<div style="position:absolute;left:55.48px;top:84.96px;height:15.07px;font:10.05px/15.07px 'DejaVu Sans Mono','Liberation Mono',monospace;color:#d4d4d4;white-space:pre;letter-spacing:0.018px;-webkit-text-stroke:0.16px">  fmt.<span style="color:#d9d9b8">Println</span>(<span style="color:#d9d9b8">cap</span>(mainHobbies))</div>
<div style="position:absolute;left:0;top:100.03px;width:33.57px;height:15.07px;font:10.05px/15.07px 'DejaVu Sans Mono','Liberation Mono',monospace;color:#c8c8c8;text-align:right;white-space:pre;-webkit-text-stroke:0.12px">20</div>
<div style="position:absolute;left:55.48px;top:100.03px;height:15.07px;font:10.05px/15.07px 'DejaVu Sans Mono','Liberation Mono',monospace;color:#d4d4d4;white-space:pre;letter-spacing:0.018px;-webkit-text-stroke:0.16px">  <span style="color:#add5e9">mainHobbies</span> = mainHobbies[]</div>
<div style="position:absolute;left:0;top:115.11px;width:33.57px;height:15.07px;font:10.05px/15.07px 'DejaVu Sans Mono','Liberation Mono',monospace;color:#858585;text-align:right;white-space:pre;-webkit-text-stroke:0.12px">21</div>
<div style="position:absolute;left:55.48px;top:115.11px;height:15.07px;font:10.05px/15.07px 'DejaVu Sans Mono','Liberation Mono',monospace;color:#d4d4d4;white-space:pre;letter-spacing:0.018px;-webkit-text-stroke:0.16px">}</div>
<div style="position:absolute;left:0;top:130.18px;width:33.57px;height:15.07px;font:10.05px/15.07px 'DejaVu Sans Mono','Liberation Mono',monospace;color:#858585;text-align:right;white-space:pre;-webkit-text-stroke:0.12px">22</div>
<div style="position:absolute;left:0;top:145.26px;width:33.57px;height:15.07px;font:10.05px/15.07px 'DejaVu Sans Mono','Liberation Mono',monospace;color:#858585;text-align:right;white-space:pre;-webkit-text-stroke:0.12px">23</div>
<div style="position:absolute;left:55.48px;top:145.26px;height:15.07px;font:10.05px/15.07px 'DejaVu Sans Mono','Liberation Mono',monospace;color:#d4d4d4;white-space:pre;letter-spacing:0.018px;-webkit-text-stroke:0.16px"><span style="color:#6f955d">// Time to practice what you learned!</span></div>
<div style="position:absolute;left:0;top:160.33px;width:33.57px;height:15.07px;font:10.05px/15.07px 'DejaVu Sans Mono','Liberation Mono',monospace;color:#858585;text-align:right;white-space:pre;-webkit-text-stroke:0.12px">24</div>
<div style="position:absolute;left:0;top:175.41px;width:33.57px;height:15.07px;font:10.05px/15.07px 'DejaVu Sans Mono','Liberation Mono',monospace;color:#858585;text-align:right;white-space:pre;-webkit-text-stroke:0.12px">25</div>
<div style="position:absolute;left:55.48px;top:175.41px;height:15.07px;font:10.05px/15.07px 'DejaVu Sans Mono','Liberation Mono',monospace;color:#d4d4d4;white-space:pre;letter-spacing:0.018px;-webkit-text-stroke:0.16px"><span style="color:#6f955d">// 1) Create a new array (!) that contains three hobbies you have</span></div>
<div style="position:absolute;left:0;top:190.48px;width:33.57px;height:15.07px;font:10.05px/15.07px 'DejaVu Sans Mono','Liberation Mono',monospace;color:#858585;text-align:right;white-space:pre;-webkit-text-stroke:0.12px">26</div>
<div style="position:absolute;left:55.48px;top:190.48px;height:15.07px;font:10.05px/15.07px 'DejaVu Sans Mono','Liberation Mono',monospace;color:#d4d4d4;white-space:pre;letter-spacing:0.018px;-webkit-text-stroke:0.16px"><span style="color:#6f955d">//    Output (print) that array in the command line.</span></div>
<div style="position:absolute;left:0;top:205.56px;width:33.57px;height:15.07px;font:10.05px/15.07px 'DejaVu Sans Mono','Liberation Mono',monospace;color:#858585;text-align:right;white-space:pre;-webkit-text-stroke:0.12px">27</div>
<div style="position:absolute;left:55.48px;top:205.56px;height:15.07px;font:10.05px/15.07px 'DejaVu Sans Mono','Liberation Mono',monospace;color:#d4d4d4;white-space:pre;letter-spacing:0.018px;-webkit-text-stroke:0.16px"><span style="color:#6f955d">// 2) Also output more data about that array:</span></div>
<div style="position:absolute;left:0;top:220.63px;width:33.57px;height:15.07px;font:10.05px/15.07px 'DejaVu Sans Mono','Liberation Mono',monospace;color:#858585;text-align:right;white-space:pre;-webkit-text-stroke:0.12px">28</div>
<div style="position:absolute;left:55.48px;top:220.63px;height:15.07px;font:10.05px/15.07px 'DejaVu Sans Mono','Liberation Mono',monospace;color:#d4d4d4;white-space:pre;letter-spacing:0.018px;-webkit-text-stroke:0.16px"><span style="color:#6f955d">//    - The first element (standalone)</span></div>
<div style="position:absolute;left:0;top:235.71px;width:33.57px;height:15.07px;font:10.05px/15.07px 'DejaVu Sans Mono','Liberation Mono',monospace;color:#858585;text-align:right;white-space:pre;-webkit-text-stroke:0.12px">29</div>
<div style="position:absolute;left:55.48px;top:235.71px;height:15.07px;font:10.05px/15.07px 'DejaVu Sans Mono','Liberation Mono',monospace;color:#d4d4d4;white-space:pre;letter-spacing:0.018px;-webkit-text-stroke:0.16px"><span style="color:#6f955d">//    - The second and third element combined as a new list</span></div>
<div style="position:absolute;left:0;top:250.78px;width:33.57px;height:15.07px;font:10.05px/15.07px 'DejaVu Sans Mono','Liberation Mono',monospace;color:#858585;text-align:right;white-space:pre;-webkit-text-stroke:0.12px">30</div>
<div style="position:absolute;left:55.48px;top:250.78px;height:15.07px;font:10.05px/15.07px 'DejaVu Sans Mono','Liberation Mono',monospace;color:#d4d4d4;white-space:pre;letter-spacing:0.018px;-webkit-text-stroke:0.16px"><span style="color:#6f955d">// 3) Create a slice based on the first element that contains</span></div>
<div style="position:absolute;left:0;top:265.86px;width:33.57px;height:15.07px;font:10.05px/15.07px 'DejaVu Sans Mono','Liberation Mono',monospace;color:#858585;text-align:right;white-space:pre;-webkit-text-stroke:0.12px">31</div>
<div style="position:absolute;left:55.48px;top:265.86px;height:15.07px;font:10.05px/15.07px 'DejaVu Sans Mono','Liberation Mono',monospace;color:#d4d4d4;white-space:pre;letter-spacing:0.018px;-webkit-text-stroke:0.16px"><span style="color:#6f955d">//    the first and second elements.</span></div>
<div style="position:absolute;left:0;top:280.93px;width:33.57px;height:15.07px;font:10.05px/15.07px 'DejaVu Sans Mono','Liberation Mono',monospace;color:#858585;text-align:right;white-space:pre;-webkit-text-stroke:0.12px">32</div>
<div style="position:absolute;left:55.48px;top:280.93px;height:15.07px;font:10.05px/15.07px 'DejaVu Sans Mono','Liberation Mono',monospace;color:#d4d4d4;white-space:pre;letter-spacing:0.018px;-webkit-text-stroke:0.16px"><span style="color:#6f955d">//    Create that slice in two different ways (i.e. create two slices in the end)</span></div>
<div style="position:absolute;left:0;top:296.01px;width:33.57px;height:15.07px;font:10.05px/15.07px 'DejaVu Sans Mono','Liberation Mono',monospace;color:#858585;text-align:right;white-space:pre;-webkit-text-stroke:0.12px">33</div>
<div style="position:absolute;left:55.48px;top:296.01px;height:15.07px;font:10.05px/15.07px 'DejaVu Sans Mono','Liberation Mono',monospace;color:#d4d4d4;white-space:pre;letter-spacing:0.018px;-webkit-text-stroke:0.16px"><span style="color:#6f955d">// 4) Re-slice the slice from (3) and change it to contain the second</span></div>
<div style="position:absolute;left:219.28px;top:100.18px;width:12.13px;height:14.07px;box-sizing:border-box;border:1px solid #6c6c6c;background:rgba(255,255,255,0.03)"></div><svg style="position:absolute;left:225.35px;top:111.94px;opacity:0.9" width="6.07" height="3.01" fill="none" stroke="#cc5650" stroke-width="0.85" stroke-linejoin="round"><polyline points="0.00,0.45 1.91,2.56 3.82,0.45 5.73,2.56 6.07,0.45"/></svg>
<div style="position:absolute;left:587.94px;top:64.86px;width:12.06px;height:104.00px;background:rgba(121,121,121,0.35)"></div>
<div style="position:absolute;left:588.00px;top:9.86px;width:4.00px;height:11.00px;background:#48611c"></div>
<div style="position:absolute;left:588.00px;top:25.86px;width:4.00px;height:57.00px;background:#48611c"></div>
<div style="position:absolute;left:588.00px;top:87.86px;width:4.00px;height:11.00px;background:#48611c"></div>
<div style="position:absolute;left:588.00px;top:98.36px;width:8.00px;height:5.00px;background:#9a9a9a"></div>
<div style="position:absolute;left:596.00px;top:98.36px;width:4.00px;height:5.00px;background:#c04a40"></div>
<div style="position:absolute;left:55.00px;top:297.70px;width:451.00px;height:11.15px;background:rgba(128,128,128,0.36)"></div>
<div style="position:absolute;left:0.00px;top:0.00px;width:600.00px;height:5.53px;background:linear-gradient(rgba(9,9,9,0.95),rgba(9,9,9,0.7) 30%,rgba(9,9,9,0))"></div>
</div>
<div style="position:absolute;left:0.00px;top:0.00px;width:600.00px;height:29.14px;background:#191919"></div>
<div style="position:absolute;left:0.00px;top:0.00px;width:123.00px;height:29.14px;background:#161616"></div>
<div style="position:absolute;left:8.64px;top:12.66px;width:16.08px;height:8.04px;"><div style="position:absolute;left:0.60px;top:1.31px;width:3.42px;height:0.70px;background:#2f6076"></div><div style="position:absolute;left:1.61px;top:2.91px;width:2.41px;height:0.70px;background:#2f6076"></div><div style="position:absolute;left:3.52px;top:-1.91px;font:italic bold 7.94px/9.53px 'Liberation Sans','DejaVu Sans',sans-serif;color:#4b96b8;-webkit-text-stroke:0.10px #4b96b8;letter-spacing:-0.50px">GO</div></div>
<div style="position:absolute;left:27.13px;top:0;height:29.14px;font:10.95px/30.15px 'Liberation Sans','DejaVu Sans',sans-serif;color:#dc6b6a;white-space:pre;letter-spacing:-0.28px">practice.go<span style="padding-left:4.42px;letter-spacing:-1.06px">1, M</span></div>
<div style="position:absolute;left:107.52px;top:11.46px;width:6.83px;height:6.83px;background:#f0f0f0;border-radius:50%"></div>
<svg style="position:absolute;left:529.65px;top:8.04px" width="13.47" height="13.47" viewBox="0 0 16 16" fill="none" stroke="#c5c5c5" stroke-width="1.13" stroke-linecap="round" stroke-linejoin="round"><circle cx="3.5" cy="3.2" r="1.8"/><circle cx="12.5" cy="12.8" r="1.8"/><path d="M3.5 5v5.5a2 2 0 0 0 2 2h2.3"/><path d="M6.3 10.7l1.8 1.8-1.8 1.8" /><path d="M12.5 11V5.5a2 2 0 0 0-2-2H8.2"/><path d="M9.7 1.7L7.9 3.5l1.8 1.8"/></svg>
<svg style="position:absolute;left:551.96px;top:7.64px" width="13.47" height="13.47" viewBox="0 0 16 16" fill="none" stroke="#c5c5c5" stroke-width="1.13" stroke-linecap="round" stroke-linejoin="round"><rect x="2.4" y="2.3" width="11.7" height="11.6" rx="0.7"/><path d="M8.25 2.3v11.6"/></svg>
<svg style="position:absolute;left:572.87px;top:8.04px" width="13.47" height="13.47" viewBox="0 0 16 16" fill="none" stroke="#c5c5c5" stroke-width="1.13" stroke-linecap="round" stroke-linejoin="round"><g fill="#c5c5c5" stroke="none"><circle cx="3.4" cy="7.6" r="0.85"/><circle cx="8.4" cy="7.6" r="0.85"/><circle cx="13.4" cy="7.6" r="0.85"/></g></svg>
<div style="position:absolute;left:575.80px;top:326.20px;font:bold 5.9px/9px 'Liberation Sans','DejaVu Sans',sans-serif;color:#989898;letter-spacing:0.22px">ûdemy</div>
</div>
<div style="position:absolute;left:600px;top:337px;width:600px;height:337px;overflow:hidden;background:#131313">
<div style="position:absolute;left:0;top:29.14px;width:600px;height:162.86px;overflow:hidden">
<div style="position:absolute;left:54.98px;top:147.61px;width:543.52px;height:15.07px;box-sizing:border-box;border:1px solid #1b1b1b;background:#161616"></div>
<div style="position:absolute;left:37.69px;top:-3.14px;width:2.61px;height:30.15px;background:#5d8626"></div>
<div style="position:absolute;left:37.69px;top:42.08px;width:2.61px;height:120.60px;background:#5d8626"></div>
<div style="position:absolute;left:54.87px;top:-3.14px;width:1.10px;height:165.82px;background:#565656"></div>
<div style="position:absolute;left:0;top:-2.79px;width:33.57px;height:15.07px;font:10.05px/15.07px 'DejaVu Sans Mono','Liberation Mono',monospace;color:#858585;text-align:right;white-space:pre;-webkit-text-stroke:0.12px">11</div>
<div style="position:absolute;left:55.48px;top:-2.79px;height:15.07px;font:10.05px/15.07px 'DejaVu Sans Mono','Liberation Mono',monospace;color:#d4d4d4;white-space:pre;letter-spacing:0.018px;-webkit-text-stroke:0.16px">  fmt.<span style="color:#d9d9b8">Println</span>(hobbies[<span style="color:#c4d1ba">0</span>])</div>
<div style="position:absolute;left:0;top:12.28px;width:33.57px;height:15.07px;font:10.05px/15.07px 'DejaVu Sans Mono','Liberation Mono',monospace;color:#858585;text-align:right;white-space:pre;-webkit-text-stroke:0.12px">12</div>
<div style="position:absolute;left:55.48px;top:12.28px;height:15.07px;font:10.05px/15.07px 'DejaVu Sans Mono','Liberation Mono',monospace;color:#d4d4d4;white-space:pre;letter-spacing:0.018px;-webkit-text-stroke:0.16px">  fmt.<span style="color:#d9d9b8">Println</span>(hobbies[<span style="color:#c4d1ba">1</span>:<span style="color:#c4d1ba">3</span>])</div>
<div style="position:absolute;left:0;top:27.36px;width:33.57px;height:15.07px;font:10.05px/15.07px 'DejaVu Sans Mono','Liberation Mono',monospace;color:#858585;text-align:right;white-space:pre;-webkit-text-stroke:0.12px">13</div>
<div style="position:absolute;left:0;top:42.43px;width:33.57px;height:15.07px;font:10.05px/15.07px 'DejaVu Sans Mono','Liberation Mono',monospace;color:#858585;text-align:right;white-space:pre;-webkit-text-stroke:0.12px">14</div>
<div style="position:absolute;left:55.48px;top:42.43px;height:15.07px;font:10.05px/15.07px 'DejaVu Sans Mono','Liberation Mono',monospace;color:#d4d4d4;white-space:pre;letter-spacing:0.018px;-webkit-text-stroke:0.16px">  <span style="color:#6f955d">// 3)</span></div>
<div style="position:absolute;left:0;top:57.51px;width:33.57px;height:15.07px;font:10.05px/15.07px 'DejaVu Sans Mono','Liberation Mono',monospace;color:#858585;text-align:right;white-space:pre;-webkit-text-stroke:0.12px">15</div>
<div style="position:absolute;left:55.48px;top:57.51px;height:15.07px;font:10.05px/15.07px 'DejaVu Sans Mono','Liberation Mono',monospace;color:#d4d4d4;white-space:pre;letter-spacing:0.018px;-webkit-text-stroke:0.16px">  <span style="color:#add5e9">mainHobbies</span> := hobbies[:<span style="color:#c4d1ba">2</span>]</div>
<div style="position:absolute;left:0;top:72.58px;width:33.57px;height:15.07px;font:10.05px/15.07px 'DejaVu Sans Mono','Liberation Mono',monospace;color:#858585;text-align:right;white-space:pre;-webkit-text-stroke:0.12px">16</div>
<div style="position:absolute;left:55.48px;top:72.58px;height:15.07px;font:10.05px/15.07px 'DejaVu Sans Mono','Liberation Mono',monospace;color:#d4d4d4;white-space:pre;letter-spacing:0.018px;-webkit-text-stroke:0.16px">  fmt.<span style="color:#d9d9b8">Println</span>(mainHobbies)</div>
<div style="position:absolute;left:0;top:87.66px;width:33.57px;height:15.07px;font:10.05px/15.07px 'DejaVu Sans Mono','Liberation Mono',monospace;color:#858585;text-align:right;white-space:pre;-webkit-text-stroke:0.12px">17</div>
<div style="position:absolute;left:0;top:102.73px;width:33.57px;height:15.07px;font:10.05px/15.07px 'DejaVu Sans Mono','Liberation Mono',monospace;color:#858585;text-align:right;white-space:pre;-webkit-text-stroke:0.12px">18</div>
<div style="position:absolute;left:55.48px;top:102.73px;height:15.07px;font:10.05px/15.07px 'DejaVu Sans Mono','Liberation Mono',monospace;color:#d4d4d4;white-space:pre;letter-spacing:0.018px;-webkit-text-stroke:0.16px">  <span style="color:#6f955d">// 4)</span></div>
<div style="position:absolute;left:0;top:117.81px;width:33.57px;height:15.07px;font:10.05px/15.07px 'DejaVu Sans Mono','Liberation Mono',monospace;color:#858585;text-align:right;white-space:pre;-webkit-text-stroke:0.12px">19</div>
<div style="position:absolute;left:55.48px;top:117.81px;height:15.07px;font:10.05px/15.07px 'DejaVu Sans Mono','Liberation Mono',monospace;color:#d4d4d4;white-space:pre;letter-spacing:0.018px;-webkit-text-stroke:0.16px">  fmt.<span style="color:#d9d9b8">Println</span>(<span style="color:#d9d9b8">cap</span>(mainHobbies))</div>
<div style="position:absolute;left:0;top:132.88px;width:33.57px;height:15.07px;font:10.05px/15.07px 'DejaVu Sans Mono','Liberation Mono',monospace;color:#858585;text-align:right;white-space:pre;-webkit-text-stroke:0.12px">20</div>
<div style="position:absolute;left:55.48px;top:132.88px;height:15.07px;font:10.05px/15.07px 'DejaVu Sans Mono','Liberation Mono',monospace;color:#d4d4d4;white-space:pre;letter-spacing:0.018px;-webkit-text-stroke:0.16px">  <span style="color:#add5e9">mainHobbies</span> = mainHobbies[<span style="color:#c4d1ba">1</span>:<span style="color:#c4d1ba">3</span>]</div>
<div style="position:absolute;left:0;top:147.96px;width:33.57px;height:15.07px;font:10.05px/15.07px 'DejaVu Sans Mono','Liberation Mono',monospace;color:#c8c8c8;text-align:right;white-space:pre;-webkit-text-stroke:0.12px">21</div>
<div style="position:absolute;left:55.48px;top:147.96px;height:15.07px;font:10.05px/15.07px 'DejaVu Sans Mono','Liberation Mono',monospace;color:#d4d4d4;white-space:pre;letter-spacing:0.018px;-webkit-text-stroke:0.16px">  fmt.<span style="color:#d9d9b8">Println</span>(mainHobbies)</div>
<div style="position:absolute;left:134.35px;top:148.11px;width:6.07px;height:14.07px;box-sizing:border-box;border:1px solid #6c6c6c;background:rgba(255,255,255,0.03)"></div><div style="position:absolute;left:207.15px;top:148.11px;width:6.07px;height:14.07px;box-sizing:border-box;border:1px solid #6c6c6c;background:rgba(255,255,255,0.03)"></div>
<div style="position:absolute;left:587.94px;top:32.86px;width:12.06px;height:32.00px;background:rgba(121,121,121,0.35)"></div>
<div style="position:absolute;left:588.00px;top:5.46px;width:4.00px;height:7.10px;background:#48611c"></div>
<div style="position:absolute;left:588.00px;top:15.26px;width:4.00px;height:48.90px;background:#48611c"></div>
<div style="position:absolute;left:588.00px;top:63.86px;width:12.00px;height:1.30px;background:#8a8a8a"></div>
<div style="position:absolute;left:592.00px;top:64.16px;width:4.00px;height:3.70px;background:#b8b8b8"></div>
<div style="position:absolute;left:0.00px;top:0.00px;width:600.00px;height:5.53px;background:linear-gradient(rgba(9,9,9,0.95),rgba(9,9,9,0.7) 30%,rgba(9,9,9,0))"></div>
</div>
<div style="position:absolute;left:0.00px;top:0.00px;width:600.00px;height:29.14px;background:#191919"></div>
<div style="position:absolute;left:0.00px;top:0.00px;width:114.00px;height:29.14px;background:#161616"></div>
<div style="position:absolute;left:8.64px;top:12.66px;width:16.08px;height:8.04px;"><div style="position:absolute;left:0.60px;top:1.31px;width:3.42px;height:0.70px;background:#2f6076"></div><div style="position:absolute;left:1.61px;top:2.91px;width:2.41px;height:0.70px;background:#2f6076"></div><div style="position:absolute;left:3.52px;top:-1.91px;font:italic bold 7.94px/9.53px 'Liberation Sans','DejaVu Sans',sans-serif;color:#4b96b8;-webkit-text-stroke:0.10px #4b96b8;letter-spacing:-0.50px">GO</div></div>
<div style="position:absolute;left:27.13px;top:0;height:29.14px;font:10.95px/30.15px 'Liberation Sans','DejaVu Sans',sans-serif;color:#dfc191;white-space:pre;letter-spacing:-0.28px">practice.go<span style="padding-left:4.42px;letter-spacing:-0.30px">M</span></div>
<svg style="position:absolute;left:98.32px;top:11.16px" width="7.34" height="7.34" viewBox="0 0 8 8" stroke="#ececec" stroke-width="1.25" stroke-linecap="round"><path d="M0.6 0.6l6.8 6.8M7.4 0.6L0.6 7.4"/></svg>
<svg style="position:absolute;left:529.65px;top:8.04px" width="13.47" height="13.47" viewBox="0 0 16 16" fill="none" stroke="#c5c5c5" stroke-width="1.13" stroke-linecap="round" stroke-linejoin="round"><circle cx="3.5" cy="3.2" r="1.8"/><circle cx="12.5" cy="12.8" r="1.8"/><path d="M3.5 5v5.5a2 2 0 0 0 2 2h2.3"/><path d="M6.3 10.7l1.8 1.8-1.8 1.8" /><path d="M12.5 11V5.5a2 2 0 0 0-2-2H8.2"/><path d="M9.7 1.7L7.9 3.5l1.8 1.8"/></svg>
<svg style="position:absolute;left:551.96px;top:7.64px" width="13.47" height="13.47" viewBox="0 0 16 16" fill="none" stroke="#c5c5c5" stroke-width="1.13" stroke-linecap="round" stroke-linejoin="round"><rect x="2.4" y="2.3" width="11.7" height="11.6" rx="0.7"/><path d="M8.25 2.3v11.6"/></svg>
<svg style="position:absolute;left:572.87px;top:8.04px" width="13.47" height="13.47" viewBox="0 0 16 16" fill="none" stroke="#c5c5c5" stroke-width="1.13" stroke-linecap="round" stroke-linejoin="round"><g fill="#c5c5c5" stroke="none"><circle cx="3.4" cy="7.6" r="0.85"/><circle cx="8.4" cy="7.6" r="0.85"/><circle cx="13.4" cy="7.6" r="0.85"/></g></svg>
<div style="position:absolute;left:0.00px;top:192.00px;width:600.00px;height:145.00px;background:#131313"></div>
<div style="position:absolute;left:0.00px;top:192.00px;width:600.00px;height:1.00px;background:#3c3c3c"></div>
<div style="position:absolute;left:18.39px;top:201.55px;font:9.20px/12.06px 'Liberation Sans','DejaVu Sans',sans-serif;color:#8a8a8a;white-space:pre;letter-spacing:-0.52px">PROBLEMS</div>
<div style="position:absolute;left:85.73px;top:201.55px;font:9.20px/12.06px 'Liberation Sans','DejaVu Sans',sans-serif;color:#8a8a8a;white-space:pre;letter-spacing:-0.52px">DEBUG CONSOLE</div>
<div style="position:absolute;left:181.10px;top:201.55px;font:9.20px/12.06px 'Liberation Sans','DejaVu Sans',sans-serif;color:#e7e7e7;white-space:pre;letter-spacing:-0.52px">TERMINAL</div>
<div style="position:absolute;left:244.42px;top:201.55px;font:9.20px/12.06px 'Liberation Sans','DejaVu Sans',sans-serif;color:#8a8a8a;white-space:pre;letter-spacing:-0.52px">OUTPUT</div>
<div style="position:absolute;left:178.89px;top:220.34px;width:46.63px;height:1.11px;background:#d0d0d0"></div>
<div style="position:absolute;left:327.24px;top:200.04px;width:142.91px;height:15.28px;background:#2e2e2e;border-radius:2.51px"></div>
<div style="position:absolute;left:334.68px;top:199.94px;font:9.04px/15.88px 'Liberation Sans','DejaVu Sans',sans-serif;color:#e0e0e0;white-space:pre;letter-spacing:-0.30px">1: zsh</div>
<svg style="position:absolute;left:453.57px;top:201.95px" width="11.05" height="11.05" viewBox="0 0 16 16" fill="none" stroke="#c5c5c5" stroke-width="1.67" stroke-linecap="round" stroke-linejoin="round"><path d="M3 5.5l5 5 5-5"/></svg>
<svg style="position:absolute;left:476.38px;top:200.84px" width="13.06" height="13.06" viewBox="0 0 16 16" fill="none" stroke="#c5c5c5" stroke-width="1.17" stroke-linecap="round" stroke-linejoin="round"><path d="M8 1.5v13M1.5 8h13"/></svg>
<svg style="position:absolute;left:491.76px;top:204.06px" width="8.04" height="8.04" viewBox="0 0 16 16" fill="none" stroke="#c5c5c5" stroke-width="1.90" stroke-linecap="round" stroke-linejoin="round"><path d="M3 5.5l5 5 5-5"/></svg>
<svg style="position:absolute;left:508.55px;top:200.94px" width="13.06" height="13.06" viewBox="0 0 16 16" fill="none" stroke="#c5c5c5" stroke-width="1.17" stroke-linecap="round" stroke-linejoin="round"><rect x="2.4" y="2.3" width="11.7" height="11.6" rx="0.7"/><path d="M8.25 2.3v11.6"/></svg>
<svg style="position:absolute;left:529.45px;top:200.74px" width="13.06" height="13.06" viewBox="0 0 16 16" fill="none" stroke="#c5c5c5" stroke-width="1.17" stroke-linecap="round" stroke-linejoin="round"><path d="M2.5 4h11M6 4V2.5h4V4M3.8 4l.6 10.2h7.2L12.2 4M6.5 6.3v6M8 6.3v6M9.5 6.3v6"/></svg>
<svg style="position:absolute;left:552.97px;top:202.35px" width="10.65" height="10.65" viewBox="0 0 16 16" fill="none" stroke="#c5c5c5" stroke-width="1.89" stroke-linecap="round" stroke-linejoin="round"><path d="M2.5 10.5l5.5-5.5 5.5 5.5"/></svg>
<svg style="position:absolute;left:575.28px;top:202.55px" width="10.45" height="10.45" viewBox="0 0 16 16" fill="none" stroke="#c5c5c5" stroke-width="1.92" stroke-linecap="round" stroke-linejoin="round"><path d="M3 3l10 10M13 3L3 13"/></svg>
<div style="position:absolute;left:16.68px;top:228.68px;height:11.96px;font:10.05px/11.96px 'DejaVu Sans Mono','Liberation Mono',monospace;color:#cccccc;white-space:pre;letter-spacing:-0.192px;-webkit-text-stroke:0.15px">g<span style="background:#cfcfcf;color:#141414">%</span></div>
<div style="position:absolute;left:16.68px;top:240.64px;height:11.96px;font:10.05px/11.96px 'DejaVu Sans Mono','Liberation Mono',monospace;color:#cccccc;white-space:pre;letter-spacing:-0.192px;-webkit-text-stroke:0.15px">~  # go </div>
<div style="position:absolute;left:63.56px;top:240.34px;width:5.86px;height:11.56px;background:#c0c0c0"></div>
<div style="position:absolute;left:575.80px;top:326.20px;font:bold 5.9px/9px 'Liberation Sans','DejaVu Sans',sans-serif;color:#989898;letter-spacing:0.22px">ûdemy</div>
</div>
<div style="position:absolute;left:1200px;top:337px;width:600px;height:337px;overflow:hidden;background:#131313">
<div style="position:absolute;left:0;top:29.14px;width:600px;height:162.86px;overflow:hidden">
<div style="position:absolute;left:54.98px;top:92.00px;width:543.52px;height:15.07px;box-sizing:border-box;border:1px solid #1b1b1b;background:#161616"></div>
<div style="position:absolute;left:37.69px;top:-13.52px;width:2.61px;height:105.52px;background:#5d8626"></div>
<div style="position:absolute;left:54.87px;top:1.56px;width:1.10px;height:90.45px;background:#565656"></div>
<div style="position:absolute;left:0;top:1.91px;width:33.57px;height:15.07px;font:10.05px/15.07px 'DejaVu Sans Mono','Liberation Mono',monospace;color:#858585;text-align:right;white-space:pre;-webkit-text-stroke:0.12px">20</div>
<div style="position:absolute;left:55.48px;top:1.91px;height:15.07px;font:10.05px/15.07px 'DejaVu Sans Mono','Liberation Mono',monospace;color:#d4d4d4;white-space:pre;letter-spacing:0.018px;-webkit-text-stroke:0.16px">  <span style="color:#add5e9">mainHobbies</span> = mainHobbies[<span style="color:#c4d1ba">1</span>:<span style="color:#c4d1ba">3</span>]</div>
<div style="position:absolute;left:0;top:16.98px;width:33.57px;height:15.07px;font:10.05px/15.07px 'DejaVu Sans Mono','Liberation Mono',monospace;color:#858585;text-align:right;white-space:pre;-webkit-text-stroke:0.12px">21</div>
<div style="position:absolute;left:55.48px;top:16.98px;height:15.07px;font:10.05px/15.07px 'DejaVu Sans Mono','Liberation Mono',monospace;color:#d4d4d4;white-space:pre;letter-spacing:0.018px;-webkit-text-stroke:0.16px">  fmt.<span style="color:#d9d9b8">Println</span>(mainHobbies)</div>
<div style="position:absolute;left:0;top:32.06px;width:33.57px;height:15.07px;font:10.05px/15.07px 'DejaVu Sans Mono','Liberation Mono',monospace;color:#858585;text-align:right;white-space:pre;-webkit-text-stroke:0.12px">22</div>
<div style="position:absolute;left:0;top:47.13px;width:33.57px;height:15.07px;font:10.05px/15.07px 'DejaVu Sans Mono','Liberation Mono',monospace;color:#858585;text-align:right;white-space:pre;-webkit-text-stroke:0.12px">23</div>
<div style="position:absolute;left:55.48px;top:47.13px;height:15.07px;font:10.05px/15.07px 'DejaVu Sans Mono','Liberation Mono',monospace;color:#d4d4d4;white-space:pre;letter-spacing:0.018px;-webkit-text-stroke:0.16px">  <span style="color:#6f955d">// 5)</span></div>
<div style="position:absolute;left:0;top:62.21px;width:33.57px;height:15.07px;font:10.05px/15.07px 'DejaVu Sans Mono','Liberation Mono',monospace;color:#858585;text-align:right;white-space:pre;-webkit-text-stroke:0.12px">24</div>
<div style="position:absolute;left:55.48px;top:62.21px;height:15.07px;font:10.05px/15.07px 'DejaVu Sans Mono','Liberation Mono',monospace;color:#d4d4d4;white-space:pre;letter-spacing:0.018px;-webkit-text-stroke:0.16px">  <span style="color:#add5e9">courseGoals</span> := []<span style="color:#5fb7a1">string</span>{<span style="color:#c29482">"Learn Go!"</span>, <span style="color:#c29482">"Learn all the basics"</span>}</div>
<div style="position:absolute;left:0;top:77.28px;width:33.57px;height:15.07px;font:10.05px/15.07px 'DejaVu Sans Mono','Liberation Mono',monospace;color:#858585;text-align:right;white-space:pre;-webkit-text-stroke:0.12px">25</div>
<div style="position:absolute;left:55.48px;top:77.28px;height:15.07px;font:10.05px/15.07px 'DejaVu Sans Mono','Liberation Mono',monospace;color:#d4d4d4;white-space:pre;letter-spacing:0.018px;-webkit-text-stroke:0.16px">  fmt.<span style="color:#d9d9b8">Println</span>(courseGoals)</div>
<div style="position:absolute;left:0;top:92.36px;width:33.57px;height:15.07px;font:10.05px/15.07px 'DejaVu Sans Mono','Liberation Mono',monospace;color:#c8c8c8;text-align:right;white-space:pre;-webkit-text-stroke:0.12px">26</div>
<div style="position:absolute;left:55.48px;top:92.36px;height:15.07px;font:10.05px/15.07px 'DejaVu Sans Mono','Liberation Mono',monospace;color:#d4d4d4;white-space:pre;letter-spacing:0.018px;-webkit-text-stroke:0.16px">}</div>
<div style="position:absolute;left:0;top:107.43px;width:33.57px;height:15.07px;font:10.05px/15.07px 'DejaVu Sans Mono','Liberation Mono',monospace;color:#858585;text-align:right;white-space:pre;-webkit-text-stroke:0.12px">27</div>
<div style="position:absolute;left:0;top:122.51px;width:33.57px;height:15.07px;font:10.05px/15.07px 'DejaVu Sans Mono','Liberation Mono',monospace;color:#858585;text-align:right;white-space:pre;-webkit-text-stroke:0.12px">28</div>
<div style="position:absolute;left:55.48px;top:122.51px;height:15.07px;font:10.05px/15.07px 'DejaVu Sans Mono','Liberation Mono',monospace;color:#d4d4d4;white-space:pre;letter-spacing:0.018px;-webkit-text-stroke:0.16px"><span style="color:#6f955d">// Time to practice what you learned!</span></div>
<div style="position:absolute;left:0;top:137.58px;width:33.57px;height:15.07px;font:10.05px/15.07px 'DejaVu Sans Mono','Liberation Mono',monospace;color:#858585;text-align:right;white-space:pre;-webkit-text-stroke:0.12px">29</div>
<div style="position:absolute;left:0;top:152.66px;width:33.57px;height:15.07px;font:10.05px/15.07px 'DejaVu Sans Mono','Liberation Mono',monospace;color:#858585;text-align:right;white-space:pre;-webkit-text-stroke:0.12px">30</div>
<div style="position:absolute;left:55.48px;top:152.66px;height:15.07px;font:10.05px/15.07px 'DejaVu Sans Mono','Liberation Mono',monospace;color:#d4d4d4;white-space:pre;letter-spacing:0.018px;-webkit-text-stroke:0.16px"><span style="color:#6f955d">// 1) Create a new array (!) that contains three hobbies you have</span></div>
<div style="position:absolute;left:55.48px;top:92.51px;width:6.07px;height:14.07px;box-sizing:border-box;border:1px solid #6c6c6c;background:rgba(255,255,255,0.03)"></div>
<div style="position:absolute;left:588.00px;top:5.46px;width:4.00px;height:17.80px;background:#48611c"></div>
<div style="position:absolute;left:588.00px;top:26.86px;width:4.00px;height:46.50px;background:#48611c"></div>
<div style="position:absolute;left:588.00px;top:73.86px;width:12.00px;height:1.30px;background:#8a8a8a"></div>
<div style="position:absolute;left:592.00px;top:10.86px;width:4.00px;height:4.70px;background:#b8b8b8"></div>
<div style="position:absolute;left:592.00px;top:73.86px;width:4.00px;height:4.00px;background:#b8b8b8"></div>
<div style="position:absolute;left:0.00px;top:0.00px;width:600.00px;height:5.53px;background:linear-gradient(rgba(9,9,9,0.95),rgba(9,9,9,0.7) 30%,rgba(9,9,9,0))"></div>
</div>
<div style="position:absolute;left:0.00px;top:0.00px;width:600.00px;height:29.14px;background:#191919"></div>
<div style="position:absolute;left:0.00px;top:0.00px;width:114.00px;height:29.14px;background:#161616"></div>
<div style="position:absolute;left:8.64px;top:12.66px;width:16.08px;height:8.04px;"><div style="position:absolute;left:0.60px;top:1.31px;width:3.42px;height:0.70px;background:#2f6076"></div><div style="position:absolute;left:1.61px;top:2.91px;width:2.41px;height:0.70px;background:#2f6076"></div><div style="position:absolute;left:3.52px;top:-1.91px;font:italic bold 7.94px/9.53px 'Liberation Sans','DejaVu Sans',sans-serif;color:#4b96b8;-webkit-text-stroke:0.10px #4b96b8;letter-spacing:-0.50px">GO</div></div>
<div style="position:absolute;left:27.13px;top:0;height:29.14px;font:10.95px/30.15px 'Liberation Sans','DejaVu Sans',sans-serif;color:#dfc191;white-space:pre;letter-spacing:-0.28px">practice.go<span style="padding-left:4.42px;letter-spacing:-0.30px">M</span></div>
<svg style="position:absolute;left:98.32px;top:11.16px" width="7.34" height="7.34" viewBox="0 0 8 8" stroke="#ececec" stroke-width="1.25" stroke-linecap="round"><path d="M0.6 0.6l6.8 6.8M7.4 0.6L0.6 7.4"/></svg>
<svg style="position:absolute;left:529.65px;top:8.04px" width="13.47" height="13.47" viewBox="0 0 16 16" fill="none" stroke="#c5c5c5" stroke-width="1.13" stroke-linecap="round" stroke-linejoin="round"><circle cx="3.5" cy="3.2" r="1.8"/><circle cx="12.5" cy="12.8" r="1.8"/><path d="M3.5 5v5.5a2 2 0 0 0 2 2h2.3"/><path d="M6.3 10.7l1.8 1.8-1.8 1.8" /><path d="M12.5 11V5.5a2 2 0 0 0-2-2H8.2"/><path d="M9.7 1.7L7.9 3.5l1.8 1.8"/></svg>
<svg style="position:absolute;left:551.96px;top:7.64px" width="13.47" height="13.47" viewBox="0 0 16 16" fill="none" stroke="#c5c5c5" stroke-width="1.13" stroke-linecap="round" stroke-linejoin="round"><rect x="2.4" y="2.3" width="11.7" height="11.6" rx="0.7"/><path d="M8.25 2.3v11.6"/></svg>
<svg style="position:absolute;left:572.87px;top:8.04px" width="13.47" height="13.47" viewBox="0 0 16 16" fill="none" stroke="#c5c5c5" stroke-width="1.13" stroke-linecap="round" stroke-linejoin="round"><g fill="#c5c5c5" stroke="none"><circle cx="3.4" cy="7.6" r="0.85"/><circle cx="8.4" cy="7.6" r="0.85"/><circle cx="13.4" cy="7.6" r="0.85"/></g></svg>
<div style="position:absolute;left:0.00px;top:192.00px;width:600.00px;height:145.00px;background:#131313"></div>
<div style="position:absolute;left:0.00px;top:192.00px;width:600.00px;height:1.00px;background:#3c3c3c"></div>
<div style="position:absolute;left:18.39px;top:201.55px;font:9.20px/12.06px 'Liberation Sans','DejaVu Sans',sans-serif;color:#8a8a8a;white-space:pre;letter-spacing:-0.52px">PROBLEMS</div>
<div style="position:absolute;left:85.73px;top:201.55px;font:9.20px/12.06px 'Liberation Sans','DejaVu Sans',sans-serif;color:#8a8a8a;white-space:pre;letter-spacing:-0.52px">DEBUG CONSOLE</div>
<div style="position:absolute;left:181.10px;top:201.55px;font:9.20px/12.06px 'Liberation Sans','DejaVu Sans',sans-serif;color:#e7e7e7;white-space:pre;letter-spacing:-0.52px">TERMINAL</div>
<div style="position:absolute;left:244.42px;top:201.55px;font:9.20px/12.06px 'Liberation Sans','DejaVu Sans',sans-serif;color:#8a8a8a;white-space:pre;letter-spacing:-0.52px">OUTPUT</div>
<div style="position:absolute;left:178.89px;top:220.34px;width:46.63px;height:1.11px;background:#d0d0d0"></div>
<div style="position:absolute;left:327.24px;top:200.04px;width:142.91px;height:15.28px;background:#2e2e2e;border-radius:2.51px"></div>
<div style="position:absolute;left:334.68px;top:199.94px;font:9.04px/15.88px 'Liberation Sans','DejaVu Sans',sans-serif;color:#e0e0e0;white-space:pre;letter-spacing:-0.30px">1: zsh</div>
<svg style="position:absolute;left:453.57px;top:201.95px" width="11.05" height="11.05" viewBox="0 0 16 16" fill="none" stroke="#c5c5c5" stroke-width="1.67" stroke-linecap="round" stroke-linejoin="round"><path d="M3 5.5l5 5 5-5"/></svg>
<svg style="position:absolute;left:476.38px;top:200.84px" width="13.06" height="13.06" viewBox="0 0 16 16" fill="none" stroke="#c5c5c5" stroke-width="1.17" stroke-linecap="round" stroke-linejoin="round"><path d="M8 1.5v13M1.5 8h13"/></svg>
<svg style="position:absolute;left:491.76px;top:204.06px" width="8.04" height="8.04" viewBox="0 0 16 16" fill="none" stroke="#c5c5c5" stroke-width="1.90" stroke-linecap="round" stroke-linejoin="round"><path d="M3 5.5l5 5 5-5"/></svg>
<svg style="position:absolute;left:508.55px;top:200.94px" width="13.06" height="13.06" viewBox="0 0 16 16" fill="none" stroke="#c5c5c5" stroke-width="1.17" stroke-linecap="round" stroke-linejoin="round"><rect x="2.4" y="2.3" width="11.7" height="11.6" rx="0.7"/><path d="M8.25 2.3v11.6"/></svg>
<div style="position:absolute;left:527.44px;top:198.83px;width:18.29px;height:17.99px;background:#2b2b2b;border-radius:3.01px"></div>
<svg style="position:absolute;left:529.45px;top:200.74px" width="13.06" height="13.06" viewBox="0 0 16 16" fill="none" stroke="#c5c5c5" stroke-width="1.17" stroke-linecap="round" stroke-linejoin="round"><path d="M2.5 4h11M6 4V2.5h4V4M3.8 4l.6 10.2h7.2L12.2 4M6.5 6.3v6M8 6.3v6M9.5 6.3v6"/></svg>
<svg style="position:absolute;left:552.97px;top:202.35px" width="10.65" height="10.65" viewBox="0 0 16 16" fill="none" stroke="#c5c5c5" stroke-width="1.89" stroke-linecap="round" stroke-linejoin="round"><path d="M2.5 10.5l5.5-5.5 5.5 5.5"/></svg>
<svg style="position:absolute;left:575.28px;top:202.55px" width="10.45" height="10.45" viewBox="0 0 16 16" fill="none" stroke="#c5c5c5" stroke-width="1.92" stroke-linecap="round" stroke-linejoin="round"><path d="M3 3l10 10M13 3L3 13"/></svg>
<div style="position:absolute;left:16.68px;top:228.68px;height:11.96px;font:10.05px/11.96px 'DejaVu Sans Mono','Liberation Mono',monospace;color:#cccccc;white-space:pre;letter-spacing:-0.192px;-webkit-text-stroke:0.15px">~  # go run .</div>
<div style="position:absolute;left:16.68px;top:240.64px;height:11.96px;font:10.05px/11.96px 'DejaVu Sans Mono','Liberation Mono',monospace;color:#cccccc;white-space:pre;letter-spacing:-0.192px;-webkit-text-stroke:0.15px">[Sports Cooking Reading]</div>
<div style="position:absolute;left:16.68px;top:252.60px;height:11.96px;font:10.05px/11.96px 'DejaVu Sans Mono','Liberation Mono',monospace;color:#cccccc;white-space:pre;letter-spacing:-0.192px;-webkit-text-stroke:0.15px">Sports</div>
<div style="position:absolute;left:16.68px;top:264.56px;height:11.96px;font:10.05px/11.96px 'DejaVu Sans Mono','Liberation Mono',monospace;color:#cccccc;white-space:pre;letter-spacing:-0.192px;-webkit-text-stroke:0.15px">[Cooking Reading]</div>
<div style="position:absolute;left:16.68px;top:276.52px;height:11.96px;font:10.05px/11.96px 'DejaVu Sans Mono','Liberation Mono',monospace;color:#cccccc;white-space:pre;letter-spacing:-0.192px;-webkit-text-stroke:0.15px">[Sports Cooking]</div>
<div style="position:absolute;left:16.68px;top:288.48px;height:11.96px;font:10.05px/11.96px 'DejaVu Sans Mono','Liberation Mono',monospace;color:#cccccc;white-space:pre;letter-spacing:-0.192px;-webkit-text-stroke:0.15px">3</div>
<div style="position:absolute;left:16.68px;top:300.44px;height:11.96px;font:10.05px/11.96px 'DejaVu Sans Mono','Liberation Mono',monospace;color:#cccccc;white-space:pre;letter-spacing:-0.192px;-webkit-text-stroke:0.15px">[Cooking Reading]</div>
<div style="position:absolute;left:16.68px;top:312.40px;height:11.96px;font:10.05px/11.96px 'DejaVu Sans Mono','Liberation Mono',monospace;color:#cccccc;white-space:pre;letter-spacing:-0.192px;-webkit-text-stroke:0.15px">[<span style="background:#3a3a3a;padding:0.7px 0">Learn Go! Learn all the basics]</span></div>
<div style="position:absolute;left:16.68px;top:324.36px;height:11.96px;font:10.05px/11.96px 'DejaVu Sans Mono','Liberation Mono',monospace;color:#cccccc;white-space:pre;letter-spacing:-0.192px;-webkit-text-stroke:0.15px">~  # </div>
<div style="position:absolute;left:45.98px;top:324.06px;width:5.86px;height:11.56px;background:#c0c0c0"></div>
<div style="position:absolute;left:575.80px;top:326.20px;font:bold 5.9px/9px 'Liberation Sans','DejaVu Sans',sans-serif;color:#989898;letter-spacing:0.22px">ûdemy</div>
</div>
<div style="position:absolute;left:0px;top:674px;width:600px;height:337px;overflow:hidden;background:#131313">
<div style="position:absolute;left:0;top:29.14px;width:600px;height:307.86px;overflow:hidden">
<div style="position:absolute;left:0;top:-1.29px;width:33.57px;height:15.07px;font:10.05px/15.07px 'DejaVu Sans Mono','Liberation Mono',monospace;color:#858585;text-align:right;white-space:pre;-webkit-text-stroke:0.12px">38</div>
<div style="position:absolute;left:55.48px;top:-1.29px;height:15.07px;font:10.05px/15.07px 'DejaVu Sans Mono','Liberation Mono',monospace;color:#d4d4d4;white-space:pre;letter-spacing:0.018px;-webkit-text-stroke:0.16px"><span style="color:#6f955d">//    - The first element (standalone)</span></div>
<div style="position:absolute;left:0;top:13.78px;width:33.57px;height:15.07px;font:10.05px/15.07px 'DejaVu Sans Mono','Liberation Mono',monospace;color:#858585;text-align:right;white-space:pre;-webkit-text-stroke:0.12px">39</div>
<div style="position:absolute;left:55.48px;top:13.78px;height:15.07px;font:10.05px/15.07px 'DejaVu Sans Mono','Liberation Mono',monospace;color:#d4d4d4;white-space:pre;letter-spacing:0.018px;-webkit-text-stroke:0.16px"><span style="color:#6f955d">//    - The second and third element combined as a new list</span></div>
<div style="position:absolute;left:0;top:28.86px;width:33.57px;height:15.07px;font:10.05px/15.07px 'DejaVu Sans Mono','Liberation Mono',monospace;color:#858585;text-align:right;white-space:pre;-webkit-text-stroke:0.12px">40</div>
<div style="position:absolute;left:55.48px;top:28.86px;height:15.07px;font:10.05px/15.07px 'DejaVu Sans Mono','Liberation Mono',monospace;color:#d4d4d4;white-space:pre;letter-spacing:0.018px;-webkit-text-stroke:0.16px"><span style="color:#6f955d">// 3) Create a slice based on the first element that contains</span></div>
<div style="position:absolute;left:0;top:43.93px;width:33.57px;height:15.07px;font:10.05px/15.07px 'DejaVu Sans Mono','Liberation Mono',monospace;color:#858585;text-align:right;white-space:pre;-webkit-text-stroke:0.12px">41</div>
<div style="position:absolute;left:55.48px;top:43.93px;height:15.07px;font:10.05px/15.07px 'DejaVu Sans Mono','Liberation Mono',monospace;color:#d4d4d4;white-space:pre;letter-spacing:0.018px;-webkit-text-stroke:0.16px"><span style="color:#6f955d">//    the first and second elements.</span></div>
<div style="position:absolute;left:0;top:59.01px;width:33.57px;height:15.07px;font:10.05px/15.07px 'DejaVu Sans Mono','Liberation Mono',monospace;color:#858585;text-align:right;white-space:pre;-webkit-text-stroke:0.12px">42</div>
<div style="position:absolute;left:55.48px;top:59.01px;height:15.07px;font:10.05px/15.07px 'DejaVu Sans Mono','Liberation Mono',monospace;color:#d4d4d4;white-space:pre;letter-spacing:0.018px;-webkit-text-stroke:0.16px"><span style="color:#6f955d">//    Create that slice in two different ways (i.e. create two slices in the end)</span></div>
<div style="position:absolute;left:0;top:74.08px;width:33.57px;height:15.07px;font:10.05px/15.07px 'DejaVu Sans Mono','Liberation Mono',monospace;color:#858585;text-align:right;white-space:pre;-webkit-text-stroke:0.12px">43</div>
<div style="position:absolute;left:55.48px;top:74.08px;height:15.07px;font:10.05px/15.07px 'DejaVu Sans Mono','Liberation Mono',monospace;color:#d4d4d4;white-space:pre;letter-spacing:0.018px;-webkit-text-stroke:0.16px"><span style="color:#6f955d">// 4) Re-slice the slice from (3) and change it to contain the second</span></div>
<div style="position:absolute;left:0;top:89.16px;width:33.57px;height:15.07px;font:10.05px/15.07px 'DejaVu Sans Mono','Liberation Mono',monospace;color:#858585;text-align:right;white-space:pre;-webkit-text-stroke:0.12px">44</div>
<div style="position:absolute;left:55.48px;top:89.16px;height:15.07px;font:10.05px/15.07px 'DejaVu Sans Mono','Liberation Mono',monospace;color:#d4d4d4;white-space:pre;letter-spacing:0.018px;-webkit-text-stroke:0.16px"><span style="color:#6f955d">//    and last element of the original array.</span></div>
<div style="position:absolute;left:0;top:104.23px;width:33.57px;height:15.07px;font:10.05px/15.07px 'DejaVu Sans Mono','Liberation Mono',monospace;color:#858585;text-align:right;white-space:pre;-webkit-text-stroke:0.12px">45</div>
<div style="position:absolute;left:55.48px;top:104.23px;height:15.07px;font:10.05px/15.07px 'DejaVu Sans Mono','Liberation Mono',monospace;color:#d4d4d4;white-space:pre;letter-spacing:0.018px;-webkit-text-stroke:0.16px"><span style="color:#6f955d">// 5) Create a "dynamic array" that contains your course goals (at least 2 goals)</span></div>
<div style="position:absolute;left:0;top:119.31px;width:33.57px;height:15.07px;font:10.05px/15.07px 'DejaVu Sans Mono','Liberation Mono',monospace;color:#858585;text-align:right;white-space:pre;-webkit-text-stroke:0.12px">46</div>
<div style="position:absolute;left:55.48px;top:119.31px;height:15.07px;font:10.05px/15.07px 'DejaVu Sans Mono','Liberation Mono',monospace;color:#d4d4d4;white-space:pre;letter-spacing:0.018px;-webkit-text-stroke:0.16px"><span style="color:#6f955d">// 6) Set the second goal to a different one AND then add a third goal to that existing dynamic array</span></div>
<div style="position:absolute;left:0;top:134.38px;width:33.57px;height:15.07px;font:10.05px/15.07px 'DejaVu Sans Mono','Liberation Mono',monospace;color:#858585;text-align:right;white-space:pre;-webkit-text-stroke:0.12px">47</div>
<div style="position:absolute;left:55.48px;top:134.38px;height:15.07px;font:10.05px/15.07px 'DejaVu Sans Mono','Liberation Mono',monospace;color:#d4d4d4;white-space:pre;letter-spacing:0.018px;-webkit-text-stroke:0.16px"><span style="color:#6f955d">// 7) Bonus: Create a "Product" struct with title, id, price and create a</span></div>
<div style="position:absolute;left:0;top:149.46px;width:33.57px;height:15.07px;font:10.05px/15.07px 'DejaVu Sans Mono','Liberation Mono',monospace;color:#858585;text-align:right;white-space:pre;-webkit-text-stroke:0.12px">48</div>
<div style="position:absolute;left:55.48px;top:149.46px;height:15.07px;font:10.05px/15.07px 'DejaVu Sans Mono','Liberation Mono',monospace;color:#d4d4d4;white-space:pre;letter-spacing:0.018px;-webkit-text-stroke:0.16px"><span style="color:#6f955d">//    dynamic list of products (at least 2 products).</span></div>
<div style="position:absolute;left:0;top:164.53px;width:33.57px;height:15.07px;font:10.05px/15.07px 'DejaVu Sans Mono','Liberation Mono',monospace;color:#858585;text-align:right;white-space:pre;-webkit-text-stroke:0.12px">49</div>
<div style="position:absolute;left:55.48px;top:164.53px;height:15.07px;font:10.05px/15.07px 'DejaVu Sans Mono','Liberation Mono',monospace;color:#d4d4d4;white-space:pre;letter-spacing:0.018px;-webkit-text-stroke:0.16px"><span style="color:#6f955d">//    Then add a third product to the existing list of products.</span></div>
<div style="position:absolute;left:0;top:179.61px;width:33.57px;height:15.07px;font:10.05px/15.07px 'DejaVu Sans Mono','Liberation Mono',monospace;color:#858585;text-align:right;white-space:pre;-webkit-text-stroke:0.12px">50</div>
<div style="position:absolute;left:587.94px;top:157.86px;width:12.06px;height:97.00px;background:rgba(121,121,121,0.35)"></div>
<div style="position:absolute;left:588.00px;top:7.86px;width:4.00px;height:62.00px;background:#48611c"></div>
<div style="position:absolute;left:588.00px;top:75.26px;width:4.00px;height:58.10px;background:#48611c"></div>
<div style="position:absolute;left:588.00px;top:132.86px;width:12.00px;height:1.30px;background:#8a8a8a"></div>
<div style="position:absolute;left:592.00px;top:17.16px;width:4.00px;height:4.70px;background:#b8b8b8"></div>
<div style="position:absolute;left:592.00px;top:132.86px;width:4.00px;height:4.50px;background:#b8b8b8"></div>
<div style="position:absolute;left:55.00px;top:297.70px;width:451.00px;height:11.15px;background:rgba(128,128,128,0.36)"></div>
<div style="position:absolute;left:0.00px;top:0.00px;width:600.00px;height:5.53px;background:linear-gradient(rgba(9,9,9,0.95),rgba(9,9,9,0.7) 30%,rgba(9,9,9,0))"></div>
</div>
<div style="position:absolute;left:0.00px;top:0.00px;width:600.00px;height:29.14px;background:#191919"></div>
<div style="position:absolute;left:0.00px;top:0.00px;width:114.00px;height:29.14px;background:#161616"></div>
<div style="position:absolute;left:8.64px;top:12.66px;width:16.08px;height:8.04px;"><div style="position:absolute;left:0.60px;top:1.31px;width:3.42px;height:0.70px;background:#2f6076"></div><div style="position:absolute;left:1.61px;top:2.91px;width:2.41px;height:0.70px;background:#2f6076"></div><div style="position:absolute;left:3.52px;top:-1.91px;font:italic bold 7.94px/9.53px 'Liberation Sans','DejaVu Sans',sans-serif;color:#4b96b8;-webkit-text-stroke:0.10px #4b96b8;letter-spacing:-0.50px">GO</div></div>
<div style="position:absolute;left:27.13px;top:0;height:29.14px;font:10.95px/30.15px 'Liberation Sans','DejaVu Sans',sans-serif;color:#dfc191;white-space:pre;letter-spacing:-0.28px">practice.go<span style="padding-left:4.42px;letter-spacing:-0.30px">M</span></div>
<svg style="position:absolute;left:98.32px;top:11.16px" width="7.34" height="7.34" viewBox="0 0 8 8" stroke="#ececec" stroke-width="1.25" stroke-linecap="round"><path d="M0.6 0.6l6.8 6.8M7.4 0.6L0.6 7.4"/></svg>
<svg style="position:absolute;left:529.65px;top:8.04px" width="13.47" height="13.47" viewBox="0 0 16 16" fill="none" stroke="#c5c5c5" stroke-width="1.13" stroke-linecap="round" stroke-linejoin="round"><circle cx="3.5" cy="3.2" r="1.8"/><circle cx="12.5" cy="12.8" r="1.8"/><path d="M3.5 5v5.5a2 2 0 0 0 2 2h2.3"/><path d="M6.3 10.7l1.8 1.8-1.8 1.8" /><path d="M12.5 11V5.5a2 2 0 0 0-2-2H8.2"/><path d="M9.7 1.7L7.9 3.5l1.8 1.8"/></svg>
<svg style="position:absolute;left:551.96px;top:7.64px" width="13.47" height="13.47" viewBox="0 0 16 16" fill="none" stroke="#c5c5c5" stroke-width="1.13" stroke-linecap="round" stroke-linejoin="round"><rect x="2.4" y="2.3" width="11.7" height="11.6" rx="0.7"/><path d="M8.25 2.3v11.6"/></svg>
<svg style="position:absolute;left:572.87px;top:8.04px" width="13.47" height="13.47" viewBox="0 0 16 16" fill="none" stroke="#c5c5c5" stroke-width="1.13" stroke-linecap="round" stroke-linejoin="round"><g fill="#c5c5c5" stroke="none"><circle cx="3.4" cy="7.6" r="0.85"/><circle cx="8.4" cy="7.6" r="0.85"/><circle cx="13.4" cy="7.6" r="0.85"/></g></svg>
<div style="position:absolute;left:575.80px;top:326.20px;font:bold 5.9px/9px 'Liberation Sans','DejaVu Sans',sans-serif;color:#989898;letter-spacing:0.22px">ûdemy</div>
</div>
<div style="position:absolute;left:600px;top:674px;width:600px;height:337px;overflow:hidden;background:#131313">
<div style="position:absolute;left:0;top:29.14px;width:600px;height:307.86px;overflow:hidden">
<div style="position:absolute;left:54.98px;top:141.70px;width:543.52px;height:15.07px;box-sizing:border-box;border:1px solid #1b1b1b;background:#161616"></div>
<div style="position:absolute;left:37.69px;top:-24.12px;width:2.61px;height:180.90px;background:#5d8626"></div>
<div style="position:absolute;left:54.87px;top:-9.04px;width:1.10px;height:165.82px;background:#565656"></div>
<div style="position:absolute;left:0;top:-8.69px;width:33.57px;height:15.07px;font:10.05px/15.07px 'DejaVu Sans Mono','Liberation Mono',monospace;color:#858585;text-align:right;white-space:pre;-webkit-text-stroke:0.12px">29</div>
<div style="position:absolute;left:55.48px;top:-8.69px;height:15.07px;font:10.05px/15.07px 'DejaVu Sans Mono','Liberation Mono',monospace;color:#d4d4d4;white-space:pre;letter-spacing:0.018px;-webkit-text-stroke:0.16px">  <span style="color:#6f955d">// 5)</span></div>
<div style="position:absolute;left:0;top:6.38px;width:33.57px;height:15.07px;font:10.05px/15.07px 'DejaVu Sans Mono','Liberation Mono',monospace;color:#858585;text-align:right;white-space:pre;-webkit-text-stroke:0.12px">30</div>
<div style="position:absolute;left:55.48px;top:6.38px;height:15.07px;font:10.05px/15.07px 'DejaVu Sans Mono','Liberation Mono',monospace;color:#d4d4d4;white-space:pre;letter-spacing:0.018px;-webkit-text-stroke:0.16px">  <span style="color:#add5e9">courseGoals</span> := []<span style="color:#5fb7a1">string</span>{<span style="color:#c29482">"Learn Go!"</span>, <span style="color:#c29482">"Learn all the basics"</span>}</div>
<div style="position:absolute;left:0;top:21.46px;width:33.57px;height:15.07px;font:10.05px/15.07px 'DejaVu Sans Mono','Liberation Mono',monospace;color:#858585;text-align:right;white-space:pre;-webkit-text-stroke:0.12px">31</div>
<div style="position:absolute;left:55.48px;top:21.46px;height:15.07px;font:10.05px/15.07px 'DejaVu Sans Mono','Liberation Mono',monospace;color:#d4d4d4;white-space:pre;letter-spacing:0.018px;-webkit-text-stroke:0.16px">  fmt.<span style="color:#d9d9b8">Println</span>(courseGoals)</div>
<div style="position:absolute;left:0;top:36.53px;width:33.57px;height:15.07px;font:10.05px/15.07px 'DejaVu Sans Mono','Liberation Mono',monospace;color:#858585;text-align:right;white-space:pre;-webkit-text-stroke:0.12px">32</div>
<div style="position:absolute;left:0;top:51.61px;width:33.57px;height:15.07px;font:10.05px/15.07px 'DejaVu Sans Mono','Liberation Mono',monospace;color:#858585;text-align:right;white-space:pre;-webkit-text-stroke:0.12px">33</div>
<div style="position:absolute;left:55.48px;top:51.61px;height:15.07px;font:10.05px/15.07px 'DejaVu Sans Mono','Liberation Mono',monospace;color:#d4d4d4;white-space:pre;letter-spacing:0.018px;-webkit-text-stroke:0.16px">  <span style="color:#6f955d">// 6)</span></div>
<div style="position:absolute;left:0;top:66.68px;width:33.57px;height:15.07px;font:10.05px/15.07px 'DejaVu Sans Mono','Liberation Mono',monospace;color:#858585;text-align:right;white-space:pre;-webkit-text-stroke:0.12px">34</div>
<div style="position:absolute;left:55.48px;top:66.68px;height:15.07px;font:10.05px/15.07px 'DejaVu Sans Mono','Liberation Mono',monospace;color:#d4d4d4;white-space:pre;letter-spacing:0.018px;-webkit-text-stroke:0.16px">  courseGoals[<span style="color:#c4d1ba">1</span>] = <span style="color:#c29482">"Learn all the details!"</span></div>
<div style="position:absolute;left:0;top:81.76px;width:33.57px;height:15.07px;font:10.05px/15.07px 'DejaVu Sans Mono','Liberation Mono',monospace;color:#858585;text-align:right;white-space:pre;-webkit-text-stroke:0.12px">35</div>
<div style="position:absolute;left:55.48px;top:81.76px;height:15.07px;font:10.05px/15.07px 'DejaVu Sans Mono','Liberation Mono',monospace;color:#d4d4d4;white-space:pre;letter-spacing:0.018px;-webkit-text-stroke:0.16px">  <span style="color:#add5e9">courseGoals</span> = <span style="color:#d9d9b8">append</span>(courseGoals, <span style="color:#c29482">"Learn all the basics!"</span>)</div>
<div style="position:absolute;left:0;top:96.83px;width:33.57px;height:15.07px;font:10.05px/15.07px 'DejaVu Sans Mono','Liberation Mono',monospace;color:#858585;text-align:right;white-space:pre;-webkit-text-stroke:0.12px">36</div>
<div style="position:absolute;left:55.48px;top:96.83px;height:15.07px;font:10.05px/15.07px 'DejaVu Sans Mono','Liberation Mono',monospace;color:#d4d4d4;white-space:pre;letter-spacing:0.018px;-webkit-text-stroke:0.16px">  fmt.<span style="color:#d9d9b8">Println</span>(courseGoals)</div>
<div style="position:absolute;left:0;top:111.91px;width:33.57px;height:15.07px;font:10.05px/15.07px 'DejaVu Sans Mono','Liberation Mono',monospace;color:#858585;text-align:right;white-space:pre;-webkit-text-stroke:0.12px">37</div>
<div style="position:absolute;left:0;top:126.98px;width:33.57px;height:15.07px;font:10.05px/15.07px 'DejaVu Sans Mono','Liberation Mono',monospace;color:#858585;text-align:right;white-space:pre;-webkit-text-stroke:0.12px">38</div>
<div style="position:absolute;left:55.48px;top:126.98px;height:15.07px;font:10.05px/15.07px 'DejaVu Sans Mono','Liberation Mono',monospace;color:#d4d4d4;white-space:pre;letter-spacing:0.018px;-webkit-text-stroke:0.16px">  <span style="color:#6f955d">// 7)</span></div>
<div style="position:absolute;left:0;top:142.06px;width:33.57px;height:15.07px;font:10.05px/15.07px 'DejaVu Sans Mono','Liberation Mono',monospace;color:#c8c8c8;text-align:right;white-space:pre;-webkit-text-stroke:0.12px">39</div>
<div style="position:absolute;left:55.48px;top:142.06px;height:15.07px;font:10.05px/15.07px 'DejaVu Sans Mono','Liberation Mono',monospace;color:#d4d4d4;white-space:pre;letter-spacing:0.018px;-webkit-text-stroke:0.16px">  <span style="color:#add5e9">products</span> := []Product{Product{<span style="color:#c29482">"first-product"</span>, <span style="color:#c29482">"A First Product"</span>}}</div>
<div style="position:absolute;left:0;top:157.13px;width:33.57px;height:15.07px;font:10.05px/15.07px 'DejaVu Sans Mono','Liberation Mono',monospace;color:#858585;text-align:right;white-space:pre;-webkit-text-stroke:0.12px">40</div>
<div style="position:absolute;left:55.48px;top:157.13px;height:15.07px;font:10.05px/15.07px 'DejaVu Sans Mono','Liberation Mono',monospace;color:#d4d4d4;white-space:pre;letter-spacing:0.018px;-webkit-text-stroke:0.16px">}</div>
<div style="position:absolute;left:0;top:172.21px;width:33.57px;height:15.07px;font:10.05px/15.07px 'DejaVu Sans Mono','Liberation Mono',monospace;color:#858585;text-align:right;white-space:pre;-webkit-text-stroke:0.12px">41</div>
<div style="position:absolute;left:0;top:187.28px;width:33.57px;height:15.07px;font:10.05px/15.07px 'DejaVu Sans Mono','Liberation Mono',monospace;color:#858585;text-align:right;white-space:pre;-webkit-text-stroke:0.12px">42</div>
<div style="position:absolute;left:55.48px;top:187.28px;height:15.07px;font:10.05px/15.07px 'DejaVu Sans Mono','Liberation Mono',monospace;color:#d4d4d4;white-space:pre;letter-spacing:0.018px;-webkit-text-stroke:0.16px"><span style="color:#6f955d">// Time to practice what you learned!</span></div>
<div style="position:absolute;left:0;top:202.36px;width:33.57px;height:15.07px;font:10.05px/15.07px 'DejaVu Sans Mono','Liberation Mono',monospace;color:#858585;text-align:right;white-space:pre;-webkit-text-stroke:0.12px">43</div>
<div style="position:absolute;left:0;top:217.43px;width:33.57px;height:15.07px;font:10.05px/15.07px 'DejaVu Sans Mono','Liberation Mono',monospace;color:#858585;text-align:right;white-space:pre;-webkit-text-stroke:0.12px">44</div>
<div style="position:absolute;left:55.48px;top:217.43px;height:15.07px;font:10.05px/15.07px 'DejaVu Sans Mono','Liberation Mono',monospace;color:#d4d4d4;white-space:pre;letter-spacing:0.018px;-webkit-text-stroke:0.16px"><span style="color:#6f955d">// 1) Create a new array (!) that contains three hobbies you have</span></div>
<div style="position:absolute;left:0;top:232.51px;width:33.57px;height:15.07px;font:10.05px/15.07px 'DejaVu Sans Mono','Liberation Mono',monospace;color:#858585;text-align:right;white-space:pre;-webkit-text-stroke:0.12px">45</div>
<div style="position:absolute;left:55.48px;top:232.51px;height:15.07px;font:10.05px/15.07px 'DejaVu Sans Mono','Liberation Mono',monospace;color:#d4d4d4;white-space:pre;letter-spacing:0.018px;-webkit-text-stroke:0.16px"><span style="color:#6f955d">//    Output (print) that array in the command line.</span></div>
<div style="position:absolute;left:0;top:247.58px;width:33.57px;height:15.07px;font:10.05px/15.07px 'DejaVu Sans Mono','Liberation Mono',monospace;color:#858585;text-align:right;white-space:pre;-webkit-text-stroke:0.12px">46</div>
<div style="position:absolute;left:55.48px;top:247.58px;height:15.07px;font:10.05px/15.07px 'DejaVu Sans Mono','Liberation Mono',monospace;color:#d4d4d4;white-space:pre;letter-spacing:0.018px;-webkit-text-stroke:0.16px"><span style="color:#6f955d">// 2) Also output more data about that array:</span></div>
<div style="position:absolute;left:0;top:262.66px;width:33.57px;height:15.07px;font:10.05px/15.07px 'DejaVu Sans Mono','Liberation Mono',monospace;color:#858585;text-align:right;white-space:pre;-webkit-text-stroke:0.12px">47</div>
<div style="position:absolute;left:55.48px;top:262.66px;height:15.07px;font:10.05px/15.07px 'DejaVu Sans Mono','Liberation Mono',monospace;color:#d4d4d4;white-space:pre;letter-spacing:0.018px;-webkit-text-stroke:0.16px"><span style="color:#6f955d">//    - The first element (standalone)</span></div>
<div style="position:absolute;left:0;top:277.73px;width:33.57px;height:15.07px;font:10.05px/15.07px 'DejaVu Sans Mono','Liberation Mono',monospace;color:#858585;text-align:right;white-space:pre;-webkit-text-stroke:0.12px">48</div>
<div style="position:absolute;left:55.48px;top:277.73px;height:15.07px;font:10.05px/15.07px 'DejaVu Sans Mono','Liberation Mono',monospace;color:#d4d4d4;white-space:pre;letter-spacing:0.018px;-webkit-text-stroke:0.16px"><span style="color:#6f955d">//    - The second and third element combined as a new list</span></div>
<div style="position:absolute;left:0;top:292.81px;width:33.57px;height:15.07px;font:10.05px/15.07px 'DejaVu Sans Mono','Liberation Mono',monospace;color:#858585;text-align:right;white-space:pre;-webkit-text-stroke:0.12px">49</div>
<div style="position:absolute;left:55.48px;top:292.81px;height:15.07px;font:10.05px/15.07px 'DejaVu Sans Mono','Liberation Mono',monospace;color:#d4d4d4;white-space:pre;letter-spacing:0.018px;-webkit-text-stroke:0.16px"><span style="color:#6f955d">// 3) Create a slice based on the first element that contains</span></div>
<div style="position:absolute;left:243.55px;top:142.21px;width:6.07px;height:14.07px;box-sizing:border-box;border:1px solid #6c6c6c;background:rgba(255,255,255,0.03)"></div><div style="position:absolute;left:455.89px;top:142.21px;width:6.07px;height:14.07px;box-sizing:border-box;border:1px solid #6c6c6c;background:rgba(255,255,255,0.03)"></div><div style="position:absolute;left:455.89px;top:142.21px;width:1.41px;height:14.07px;background:#cfcfcf"></div><svg style="position:absolute;left:67.61px;top:153.97px;opacity:0.9" width="48.53" height="3.01" fill="none" stroke="#cc5650" stroke-width="0.85" stroke-linejoin="round"><polyline points="0.00,0.45 1.91,2.56 3.82,0.45 5.73,2.56 7.64,0.45 9.55,2.56 11.46,0.45 13.37,2.56 15.28,0.45 17.19,2.56 19.09,0.45 21.00,2.56 22.91,0.45 24.82,2.56 26.73,0.45 28.64,2.56 30.55,0.45 32.46,2.56 34.37,0.45 36.28,2.56 38.19,0.45 40.10,2.56 42.01,0.45 43.92,2.56 45.83,0.45 47.74,2.56 48.53,0.45"/></svg><svg style="position:absolute;left:201.08px;top:153.97px;opacity:0.9" width="254.81" height="3.01" fill="none" stroke="#cc5650" stroke-width="0.85" stroke-linejoin="round"><polyline points="0.00,0.45 1.91,2.56 3.82,0.45 5.73,2.56 7.64,0.45 9.55,2.56 11.46,0.45 13.37,2.56 15.28,0.45 17.19,2.56 19.09,0.45 21.00,2.56 22.91,0.45 24.82,2.56 26.73,0.45 28.64,2.56 30.55,0.45 32.46,2.56 34.37,0.45 36.28,2.56 38.19,0.45 40.10,2.56 42.01,0.45 43.92,2.56 45.83,0.45 47.74,2.56 49.65,0.45 51.56,2.56 53.47,0.45 55.38,2.56 57.28,0.45 59.19,2.56 61.10,0.45 63.01,2.56 64.92,0.45 66.83,2.56 68.74,0.45 70.65,2.56 72.56,0.45 74.47,2.56 76.38,0.45 78.29,2.56 80.20,0.45 82.11,2.56 84.02,0.45 85.93,2.56 87.84,0.45 89.75,2.56 91.66,0.45 93.57,2.56 95.47,0.45 97.38,2.56 99.29,0.45 101.20,2.56 103.11,0.45 105.02,2.56 106.93,0.45 108.84,2.56 110.75,0.45 112.66,2.56 114.57,0.45 116.48,2.56 118.39,0.45 120.30,2.56 122.21,0.45 124.12,2.56 126.03,0.45 127.94,2.56 129.85,0.45 131.76,2.56 133.66,0.45 135.57,2.56 137.48,0.45 139.39,2.56 141.30,0.45 143.21,2.56 145.12,0.45 147.03,2.56 148.94,0.45 150.85,2.56 152.76,0.45 154.67,2.56 156.58,0.45 158.49,2.56 160.40,0.45 162.31,2.56 164.22,0.45 166.13,2.56 168.04,0.45 169.95,2.56 171.85,0.45 173.76,2.56 175.67,0.45 177.58,2.56 179.49,0.45 181.40,2.56 183.31,0.45 185.22,2.56 187.13,0.45 189.04,2.56 190.95,0.45 192.86,2.56 194.77,0.45 196.68,2.56 198.59,0.45 200.50,2.56 202.41,0.45 204.32,2.56 206.23,0.45 208.14,2.56 210.04,0.45 211.95,2.56 213.86,0.45 215.77,2.56 217.68,0.45 219.59,2.56 221.50,0.45 223.41,2.56 225.32,0.45 227.23,2.56 229.14,0.45 231.05,2.56 232.96,0.45 234.87,2.56 236.78,0.45 238.69,2.56 240.60,0.45 242.51,2.56 244.42,0.45 246.33,2.56 248.23,0.45 250.14,2.56 252.05,0.45 253.96,2.56 254.81,0.45"/></svg><svg style="position:absolute;left:56.69px;top:128.14px" width="9.04" height="12.06" viewBox="0 0 9 12"><circle cx="4.5" cy="4.2" r="3.8" fill="#f2c744"/><rect x="2.8" y="7.4" width="3.4" height="3.2" rx="0.6" fill="#d9a520"/></svg>
<div style="position:absolute;left:587.94px;top:112.86px;width:12.06px;height:79.00px;background:rgba(121,121,121,0.35)"></div>
<div style="position:absolute;left:588.00px;top:8.86px;width:4.00px;height:30.00px;background:#48611c"></div>
<div style="position:absolute;left:588.00px;top:43.86px;width:4.00px;height:27.00px;background:#48611c"></div>
<div style="position:absolute;left:588.00px;top:74.86px;width:4.00px;height:74.00px;background:#48611c"></div>
<div style="position:absolute;left:588.00px;top:148.86px;width:8.00px;height:4.00px;background:#9a9a9a"></div>
<div style="position:absolute;left:596.00px;top:148.86px;width:4.00px;height:4.00px;background:#c04a40"></div>
<div style="position:absolute;left:55.00px;top:297.70px;width:451.00px;height:11.15px;background:rgba(128,128,128,0.36)"></div>
<div style="position:absolute;left:0.00px;top:0.00px;width:600.00px;height:5.53px;background:linear-gradient(rgba(9,9,9,0.95),rgba(9,9,9,0.7) 30%,rgba(9,9,9,0))"></div>
</div>
<div style="position:absolute;left:0.00px;top:0.00px;width:600.00px;height:29.14px;background:#191919"></div>
<div style="position:absolute;left:0.00px;top:0.00px;width:124.00px;height:29.14px;background:#161616"></div>
<div style="position:absolute;left:8.64px;top:12.66px;width:16.08px;height:8.04px;"><div style="position:absolute;left:0.60px;top:1.31px;width:3.42px;height:0.70px;background:#2f6076"></div><div style="position:absolute;left:1.61px;top:2.91px;width:2.41px;height:0.70px;background:#2f6076"></div><div style="position:absolute;left:3.52px;top:-1.91px;font:italic bold 7.94px/9.53px 'Liberation Sans','DejaVu Sans',sans-serif;color:#4b96b8;-webkit-text-stroke:0.10px #4b96b8;letter-spacing:-0.50px">GO</div></div>
<div style="position:absolute;left:27.13px;top:0;height:29.14px;font:10.95px/30.15px 'Liberation Sans','DejaVu Sans',sans-serif;color:#dc6b6a;white-space:pre;letter-spacing:-0.28px">practice.go<span style="padding-left:4.42px;letter-spacing:-1.06px">2, M</span></div>
<div style="position:absolute;left:108.52px;top:11.46px;width:6.83px;height:6.83px;background:#f0f0f0;border-radius:50%"></div>
<svg style="position:absolute;left:529.65px;top:8.04px" width="13.47" height="13.47" viewBox="0 0 16 16" fill="none" stroke="#c5c5c5" stroke-width="1.13" stroke-linecap="round" stroke-linejoin="round"><circle cx="3.5" cy="3.2" r="1.8"/><circle cx="12.5" cy="12.8" r="1.8"/><path d="M3.5 5v5.5a2 2 0 0 0 2 2h2.3"/><path d="M6.3 10.7l1.8 1.8-1.8 1.8" /><path d="M12.5 11V5.5a2 2 0 0 0-2-2H8.2"/><path d="M9.7 1.7L7.9 3.5l1.8 1.8"/></svg>
<svg style="position:absolute;left:551.96px;top:7.64px" width="13.47" height="13.47" viewBox="0 0 16 16" fill="none" stroke="#c5c5c5" stroke-width="1.13" stroke-linecap="round" stroke-linejoin="round"><rect x="2.4" y="2.3" width="11.7" height="11.6" rx="0.7"/><path d="M8.25 2.3v11.6"/></svg>
<svg style="position:absolute;left:572.87px;top:8.04px" width="13.47" height="13.47" viewBox="0 0 16 16" fill="none" stroke="#c5c5c5" stroke-width="1.13" stroke-linecap="round" stroke-linejoin="round"><g fill="#c5c5c5" stroke="none"><circle cx="3.4" cy="7.6" r="0.85"/><circle cx="8.4" cy="7.6" r="0.85"/><circle cx="13.4" cy="7.6" r="0.85"/></g></svg>
<div style="position:absolute;left:575.80px;top:326.20px;font:bold 5.9px/9px 'Liberation Sans','DejaVu Sans',sans-serif;color:#989898;letter-spacing:0.22px">ûdemy</div>
</div>
<div style="position:absolute;left:1200px;top:674px;width:600px;height:337px;overflow:hidden;background:#131313">
<div style="position:absolute;left:0;top:29.14px;width:600px;height:307.86px;overflow:hidden">
<div style="position:absolute;left:67.61px;top:72.03px;width:24.27px;height:15.07px;background:#244c77"></div><div style="position:absolute;left:55.48px;top:87.10px;width:139.54px;height:15.07px;background:#244c77"></div><div style="position:absolute;left:55.48px;top:102.18px;width:151.67px;height:15.07px;background:#244c77"></div><div style="position:absolute;left:55.48px;top:117.26px;width:24.27px;height:15.07px;background:#244c77"></div>
<div style="position:absolute;left:37.69px;top:-18.42px;width:2.61px;height:286.43px;background:#5d8626"></div>
<div style="position:absolute;left:54.87px;top:-3.34px;width:1.10px;height:271.35px;background:#2c2c2c"></div>
<div style="position:absolute;left:67.01px;top:72.03px;width:1.10px;height:150.75px;background:#2c2c2c"></div>
<div style="position:absolute;left:79.14px;top:132.33px;width:1.10px;height:0.00px;background:#565656"></div>
<div style="position:absolute;left:79.14px;top:162.48px;width:1.10px;height:45.22px;background:#2c2c2c"></div>
<div style="position:absolute;left:0;top:-2.99px;width:33.57px;height:15.07px;font:10.05px/15.07px 'DejaVu Sans Mono','Liberation Mono',monospace;color:#858585;text-align:right;white-space:pre;-webkit-text-stroke:0.12px">35</div>
<div style="position:absolute;left:55.48px;top:-2.99px;height:15.07px;font:10.05px/15.07px 'DejaVu Sans Mono','Liberation Mono',monospace;color:#d4d4d4;white-space:pre;letter-spacing:0.018px;-webkit-text-stroke:0.16px">  <span style="color:#add5e9">courseGoals</span> = <span style="color:#d9d9b8">append</span>(courseGoals, <span style="color:#c29482">"Learn all the basics!"</span>)</div>
<div style="position:absolute;left:0;top:12.08px;width:33.57px;height:15.07px;font:10.05px/15.07px 'DejaVu Sans Mono','Liberation Mono',monospace;color:#858585;text-align:right;white-space:pre;-webkit-text-stroke:0.12px">36</div>
<div style="position:absolute;left:55.48px;top:12.08px;height:15.07px;font:10.05px/15.07px 'DejaVu Sans Mono','Liberation Mono',monospace;color:#d4d4d4;white-space:pre;letter-spacing:0.018px;-webkit-text-stroke:0.16px">  fmt.<span style="color:#d9d9b8">Println</span>(courseGoals)</div>
<div style="position:absolute;left:0;top:27.16px;width:33.57px;height:15.07px;font:10.05px/15.07px 'DejaVu Sans Mono','Liberation Mono',monospace;color:#858585;text-align:right;white-space:pre;-webkit-text-stroke:0.12px">37</div>
<div style="position:absolute;left:0;top:42.23px;width:33.57px;height:15.07px;font:10.05px/15.07px 'DejaVu Sans Mono','Liberation Mono',monospace;color:#858585;text-align:right;white-space:pre;-webkit-text-stroke:0.12px">38</div>
<div style="position:absolute;left:55.48px;top:42.23px;height:15.07px;font:10.05px/15.07px 'DejaVu Sans Mono','Liberation Mono',monospace;color:#d4d4d4;white-space:pre;letter-spacing:0.018px;-webkit-text-stroke:0.16px">  <span style="color:#6f955d">// 7)</span></div>
<div style="position:absolute;left:0;top:57.31px;width:33.57px;height:15.07px;font:10.05px/15.07px 'DejaVu Sans Mono','Liberation Mono',monospace;color:#858585;text-align:right;white-space:pre;-webkit-text-stroke:0.12px">39</div>
<div style="position:absolute;left:55.48px;top:57.31px;height:15.07px;font:10.05px/15.07px 'DejaVu Sans Mono','Liberation Mono',monospace;color:#d4d4d4;white-space:pre;letter-spacing:0.018px;-webkit-text-stroke:0.16px">  <span style="color:#add5e9">products</span> := []Product{</div>
<div style="position:absolute;left:0;top:72.38px;width:33.57px;height:15.07px;font:10.05px/15.07px 'DejaVu Sans Mono','Liberation Mono',monospace;color:#858585;text-align:right;white-space:pre;-webkit-text-stroke:0.12px">40</div>
<div style="position:absolute;left:55.48px;top:72.38px;height:15.07px;font:10.05px/15.07px 'DejaVu Sans Mono','Liberation Mono',monospace;color:#d4d4d4;white-space:pre;letter-spacing:0.018px;-webkit-text-stroke:0.16px">    {</div>
<div style="position:absolute;left:0;top:87.46px;width:33.57px;height:15.07px;font:10.05px/15.07px 'DejaVu Sans Mono','Liberation Mono',monospace;color:#858585;text-align:right;white-space:pre;-webkit-text-stroke:0.12px">41</div>
<div style="position:absolute;left:55.48px;top:87.46px;height:15.07px;font:10.05px/15.07px 'DejaVu Sans Mono','Liberation Mono',monospace;color:#d4d4d4;white-space:pre;letter-spacing:0.018px;-webkit-text-stroke:0.16px">      <span style="color:#c29482">"first-product"</span>,</div>
<div style="position:absolute;left:0;top:102.53px;width:33.57px;height:15.07px;font:10.05px/15.07px 'DejaVu Sans Mono','Liberation Mono',monospace;color:#858585;text-align:right;white-space:pre;-webkit-text-stroke:0.12px">42</div>
<div style="position:absolute;left:55.48px;top:102.53px;height:15.07px;font:10.05px/15.07px 'DejaVu Sans Mono','Liberation Mono',monospace;color:#d4d4d4;white-space:pre;letter-spacing:0.018px;-webkit-text-stroke:0.16px">      <span style="color:#c29482">"A First Product"</span>,</div>
<div style="position:absolute;left:0;top:117.61px;width:33.57px;height:15.07px;font:10.05px/15.07px 'DejaVu Sans Mono','Liberation Mono',monospace;color:#c8c8c8;text-align:right;white-space:pre;-webkit-text-stroke:0.12px">43</div>
<div style="position:absolute;left:55.48px;top:117.61px;height:15.07px;font:10.05px/15.07px 'DejaVu Sans Mono','Liberation Mono',monospace;color:#d4d4d4;white-space:pre;letter-spacing:0.018px;-webkit-text-stroke:0.16px">      <span style="color:#c4d1ba">12.99</span>,</div>
<div style="position:absolute;left:0;top:132.68px;width:33.57px;height:15.07px;font:10.05px/15.07px 'DejaVu Sans Mono','Liberation Mono',monospace;color:#858585;text-align:right;white-space:pre;-webkit-text-stroke:0.12px">44</div>
<div style="position:absolute;left:55.48px;top:132.68px;height:15.07px;font:10.05px/15.07px 'DejaVu Sans Mono','Liberation Mono',monospace;color:#d4d4d4;white-space:pre;letter-spacing:0.018px;-webkit-text-stroke:0.16px">    },</div>
<div style="position:absolute;left:0;top:147.76px;width:33.57px;height:15.07px;font:10.05px/15.07px 'DejaVu Sans Mono','Liberation Mono',monospace;color:#858585;text-align:right;white-space:pre;-webkit-text-stroke:0.12px">45</div>
<div style="position:absolute;left:55.48px;top:147.76px;height:15.07px;font:10.05px/15.07px 'DejaVu Sans Mono','Liberation Mono',monospace;color:#d4d4d4;white-space:pre;letter-spacing:0.018px;-webkit-text-stroke:0.16px">    {</div>
<div style="position:absolute;left:0;top:162.83px;width:33.57px;height:15.07px;font:10.05px/15.07px 'DejaVu Sans Mono','Liberation Mono',monospace;color:#858585;text-align:right;white-space:pre;-webkit-text-stroke:0.12px">46</div>
<div style="position:absolute;left:55.48px;top:162.83px;height:15.07px;font:10.05px/15.07px 'DejaVu Sans Mono','Liberation Mono',monospace;color:#d4d4d4;white-space:pre;letter-spacing:0.018px;-webkit-text-stroke:0.16px">      <span style="color:#c29482">"second-product"</span>,</div>
<div style="position:absolute;left:0;top:177.91px;width:33.57px;height:15.07px;font:10.05px/15.07px 'DejaVu Sans Mono','Liberation Mono',monospace;color:#858585;text-align:right;white-space:pre;-webkit-text-stroke:0.12px">47</div>
<div style="position:absolute;left:55.48px;top:177.91px;height:15.07px;font:10.05px/15.07px 'DejaVu Sans Mono','Liberation Mono',monospace;color:#d4d4d4;white-space:pre;letter-spacing:0.018px;-webkit-text-stroke:0.16px">      <span style="color:#c29482">"A Second Product"</span>,</div>
<div style="position:absolute;left:0;top:192.98px;width:33.57px;height:15.07px;font:10.05px/15.07px 'DejaVu Sans Mono','Liberation Mono',monospace;color:#858585;text-align:right;white-space:pre;-webkit-text-stroke:0.12px">48</div>
<div style="position:absolute;left:55.48px;top:192.98px;height:15.07px;font:10.05px/15.07px 'DejaVu Sans Mono','Liberation Mono',monospace;color:#d4d4d4;white-space:pre;letter-spacing:0.018px;-webkit-text-stroke:0.16px">      <span style="color:#c4d1ba">129.99</span>,</div>
<div style="position:absolute;left:0;top:208.06px;width:33.57px;height:15.07px;font:10.05px/15.07px 'DejaVu Sans Mono','Liberation Mono',monospace;color:#858585;text-align:right;white-space:pre;-webkit-text-stroke:0.12px">49</div>
<div style="position:absolute;left:55.48px;top:208.06px;height:15.07px;font:10.05px/15.07px 'DejaVu Sans Mono','Liberation Mono',monospace;color:#d4d4d4;white-space:pre;letter-spacing:0.018px;-webkit-text-stroke:0.16px">    },</div>
<div style="position:absolute;left:0;top:223.13px;width:33.57px;height:15.07px;font:10.05px/15.07px 'DejaVu Sans Mono','Liberation Mono',monospace;color:#858585;text-align:right;white-space:pre;-webkit-text-stroke:0.12px">50</div>
<div style="position:absolute;left:55.48px;top:223.13px;height:15.07px;font:10.05px/15.07px 'DejaVu Sans Mono','Liberation Mono',monospace;color:#d4d4d4;white-space:pre;letter-spacing:0.018px;-webkit-text-stroke:0.16px">  }</div>
<div style="position:absolute;left:0;top:238.21px;width:33.57px;height:15.07px;font:10.05px/15.07px 'DejaVu Sans Mono','Liberation Mono',monospace;color:#858585;text-align:right;white-space:pre;-webkit-text-stroke:0.12px">51</div>
<div style="position:absolute;left:0;top:253.28px;width:33.57px;height:15.07px;font:10.05px/15.07px 'DejaVu Sans Mono','Liberation Mono',monospace;color:#858585;text-align:right;white-space:pre;-webkit-text-stroke:0.12px">52</div>
<div style="position:absolute;left:55.48px;top:253.28px;height:15.07px;font:10.05px/15.07px 'DejaVu Sans Mono','Liberation Mono',monospace;color:#d4d4d4;white-space:pre;letter-spacing:0.018px;-webkit-text-stroke:0.16px">  fmt.<span style="color:#d9d9b8">Println</span>(products)</div>
<div style="position:absolute;left:0;top:268.36px;width:33.57px;height:15.07px;font:10.05px/15.07px 'DejaVu Sans Mono','Liberation Mono',monospace;color:#858585;text-align:right;white-space:pre;-webkit-text-stroke:0.12px">53</div>
<div style="position:absolute;left:55.48px;top:268.36px;height:15.07px;font:10.05px/15.07px 'DejaVu Sans Mono','Liberation Mono',monospace;color:#d4d4d4;white-space:pre;letter-spacing:0.018px;-webkit-text-stroke:0.16px">}</div>
<div style="position:absolute;left:0;top:283.43px;width:33.57px;height:15.07px;font:10.05px/15.07px 'DejaVu Sans Mono','Liberation Mono',monospace;color:#858585;text-align:right;white-space:pre;-webkit-text-stroke:0.12px">54</div>
<div style="position:absolute;left:0;top:298.51px;width:33.57px;height:15.07px;font:10.05px/15.07px 'DejaVu Sans Mono','Liberation Mono',monospace;color:#858585;text-align:right;white-space:pre;-webkit-text-stroke:0.12px">55</div>
<div style="position:absolute;left:55.48px;top:298.51px;height:15.07px;font:10.05px/15.07px 'DejaVu Sans Mono','Liberation Mono',monospace;color:#d4d4d4;white-space:pre;letter-spacing:0.018px;-webkit-text-stroke:0.16px"><span style="color:#6f955d">// Time to practice what you learned!</span></div>
<div style="position:absolute;left:79.74px;top:117.76px;width:1.41px;height:14.07px;background:#cfcfcf"></div><div style="position:absolute;left:68.21px;top:72.03px;height:15.07px;font:8.54px/15.07px 'DejaVu Sans Mono','Liberation Mono',monospace;color:rgba(190,215,245,0.17)">→</div><div style="position:absolute;left:56.08px;top:87.10px;height:15.07px;font:8.54px/15.07px 'DejaVu Sans Mono','Liberation Mono',monospace;color:rgba(190,215,245,0.17)">→</div><div style="position:absolute;left:68.21px;top:87.10px;height:15.07px;font:8.54px/15.07px 'DejaVu Sans Mono','Liberation Mono',monospace;color:rgba(190,215,245,0.17)">→</div><div style="position:absolute;left:80.35px;top:87.10px;height:15.07px;font:8.54px/15.07px 'DejaVu Sans Mono','Liberation Mono',monospace;color:rgba(190,215,245,0.17)">→</div><div style="position:absolute;left:56.08px;top:102.18px;height:15.07px;font:8.54px/15.07px 'DejaVu Sans Mono','Liberation Mono',monospace;color:rgba(190,215,245,0.17)">→</div><div style="position:absolute;left:68.21px;top:102.18px;height:15.07px;font:8.54px/15.07px 'DejaVu Sans Mono','Liberation Mono',monospace;color:rgba(190,215,245,0.17)">→</div><div style="position:absolute;left:80.35px;top:102.18px;height:15.07px;font:8.54px/15.07px 'DejaVu Sans Mono','Liberation Mono',monospace;color:rgba(190,215,245,0.17)">→</div><div style="position:absolute;left:56.08px;top:117.26px;height:15.07px;font:8.54px/15.07px 'DejaVu Sans Mono','Liberation Mono',monospace;color:rgba(190,215,245,0.17)">→</div><div style="position:absolute;left:68.21px;top:117.26px;height:15.07px;font:8.54px/15.07px 'DejaVu Sans Mono','Liberation Mono',monospace;color:rgba(190,215,245,0.17)">→</div>
<div style="position:absolute;left:587.94px;top:115.86px;width:12.06px;height:67.00px;background:rgba(121,121,121,0.35)"></div>
<div style="position:absolute;left:588.00px;top:6.86px;width:4.00px;height:26.00px;background:#48611c"></div>
<div style="position:absolute;left:588.00px;top:36.86px;width:4.00px;height:54.00px;background:#48611c"></div>
<div style="position:absolute;left:588.00px;top:94.86px;width:4.00px;height:79.00px;background:#48611c"></div>
<div style="position:absolute;left:588.00px;top:140.86px;width:12.00px;height:1.50px;background:#8a8a8a"></div>
<div style="position:absolute;left:55.00px;top:297.70px;width:451.00px;height:11.15px;background:rgba(128,128,128,0.36)"></div>
<div style="position:absolute;left:0.00px;top:0.00px;width:600.00px;height:5.53px;background:linear-gradient(rgba(9,9,9,0.95),rgba(9,9,9,0.7) 30%,rgba(9,9,9,0))"></div>
</div>
<div style="position:absolute;left:0.00px;top:0.00px;width:600.00px;height:29.14px;background:#191919"></div>
<div style="position:absolute;left:0.00px;top:0.00px;width:114.00px;height:29.14px;background:#161616"></div>
<div style="position:absolute;left:8.64px;top:12.66px;width:16.08px;height:8.04px;"><div style="position:absolute;left:0.60px;top:1.31px;width:3.42px;height:0.70px;background:#2f6076"></div><div style="position:absolute;left:1.61px;top:2.91px;width:2.41px;height:0.70px;background:#2f6076"></div><div style="position:absolute;left:3.52px;top:-1.91px;font:italic bold 7.94px/9.53px 'Liberation Sans','DejaVu Sans',sans-serif;color:#4b96b8;-webkit-text-stroke:0.10px #4b96b8;letter-spacing:-0.50px">GO</div></div>
<div style="position:absolute;left:27.13px;top:0;height:29.14px;font:10.95px/30.15px 'Liberation Sans','DejaVu Sans',sans-serif;color:#dfc191;white-space:pre;letter-spacing:-0.28px">practice.go<span style="padding-left:4.42px;letter-spacing:-0.30px">M</span></div>
<div style="position:absolute;left:98.52px;top:11.46px;width:6.83px;height:6.83px;background:#f0f0f0;border-radius:50%"></div>
<svg style="position:absolute;left:529.65px;top:8.04px" width="13.47" height="13.47" viewBox="0 0 16 16" fill="none" stroke="#c5c5c5" stroke-width="1.13" stroke-linecap="round" stroke-linejoin="round"><circle cx="3.5" cy="3.2" r="1.8"/><circle cx="12.5" cy="12.8" r="1.8"/><path d="M3.5 5v5.5a2 2 0 0 0 2 2h2.3"/><path d="M6.3 10.7l1.8 1.8-1.8 1.8" /><path d="M12.5 11V5.5a2 2 0 0 0-2-2H8.2"/><path d="M9.7 1.7L7.9 3.5l1.8 1.8"/></svg>
<svg style="position:absolute;left:551.96px;top:7.64px" width="13.47" height="13.47" viewBox="0 0 16 16" fill="none" stroke="#c5c5c5" stroke-width="1.13" stroke-linecap="round" stroke-linejoin="round"><rect x="2.4" y="2.3" width="11.7" height="11.6" rx="0.7"/><path d="M8.25 2.3v11.6"/></svg>
<svg style="position:absolute;left:572.87px;top:8.04px" width="13.47" height="13.47" viewBox="0 0 16 16" fill="none" stroke="#c5c5c5" stroke-width="1.13" stroke-linecap="round" stroke-linejoin="round"><g fill="#c5c5c5" stroke="none"><circle cx="3.4" cy="7.6" r="0.85"/><circle cx="8.4" cy="7.6" r="0.85"/><circle cx="13.4" cy="7.6" r="0.85"/></g></svg>
<div style="position:absolute;left:575.80px;top:326.20px;font:bold 5.9px/9px 'Liberation Sans','DejaVu Sans',sans-serif;color:#989898;letter-spacing:0.22px">ûdemy</div>
</div>
</body></html>
